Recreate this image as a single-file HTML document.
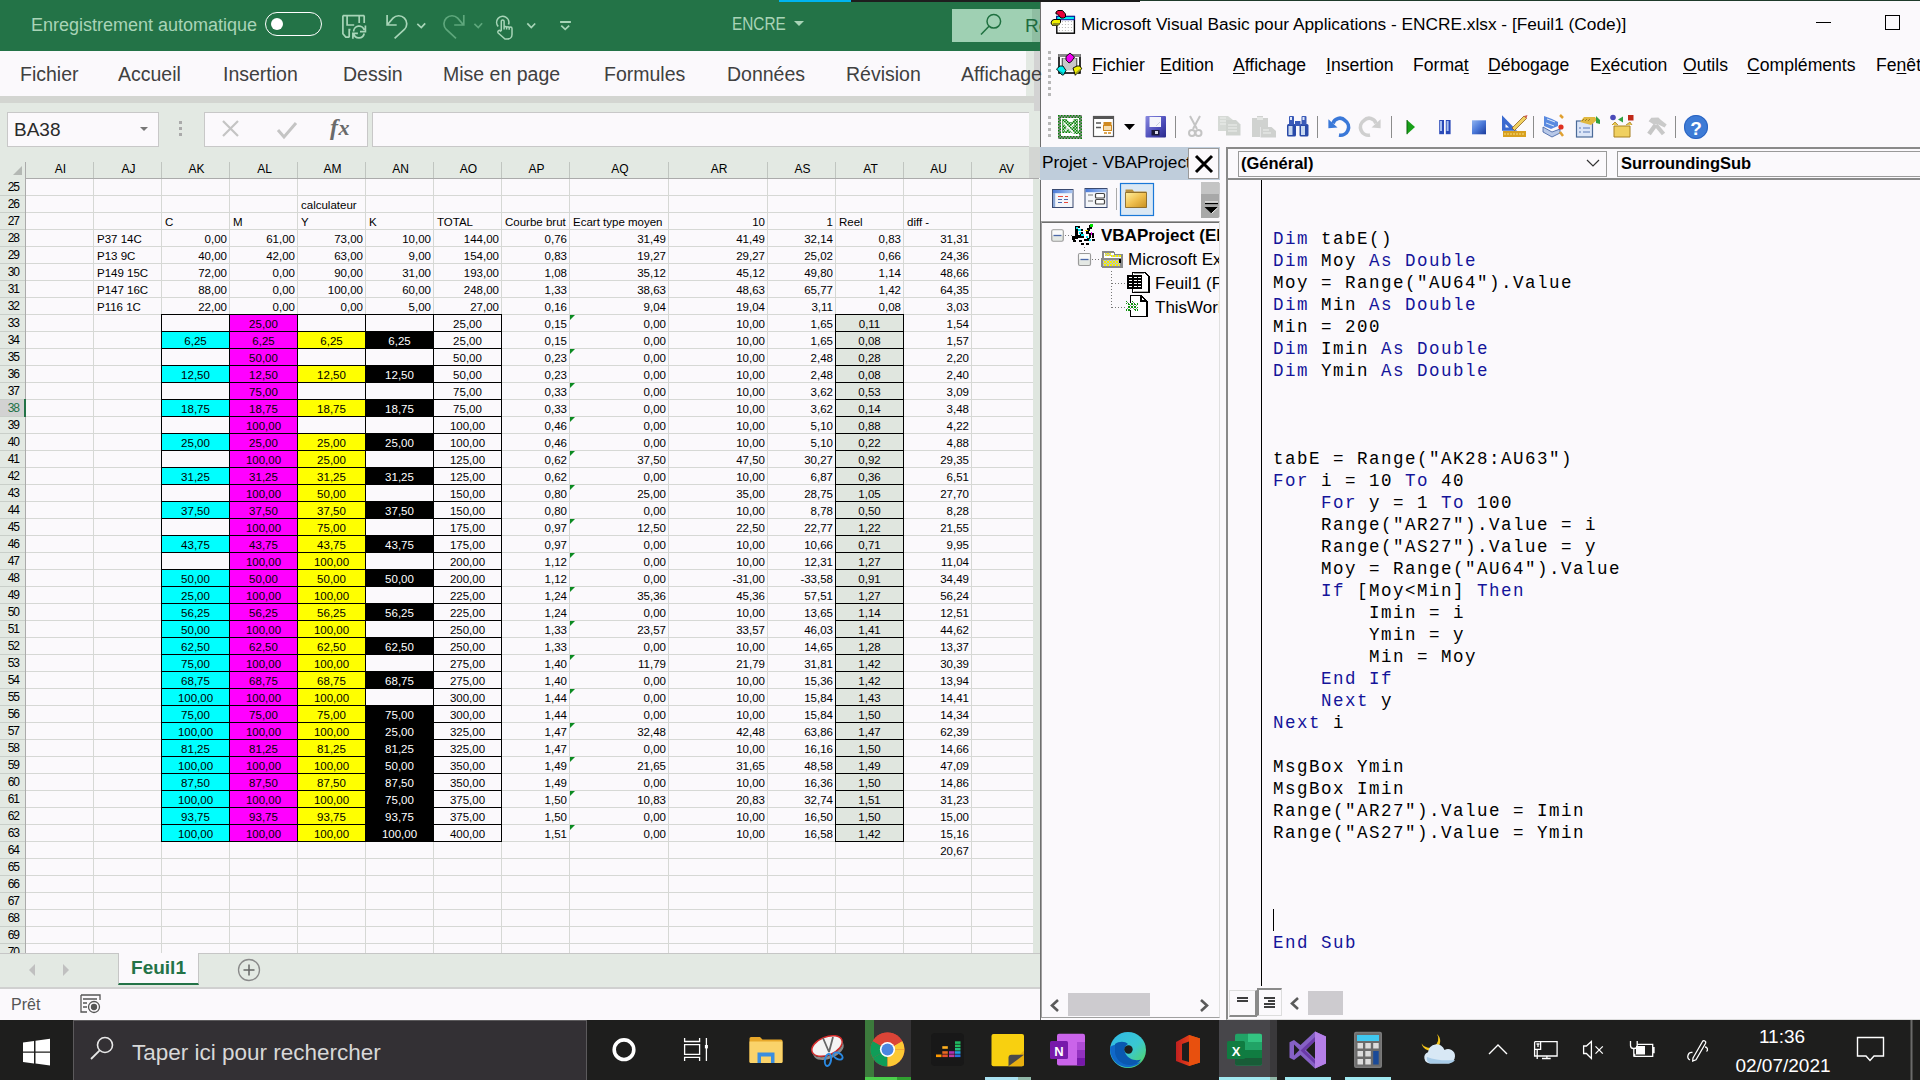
<!DOCTYPE html><html><head><meta charset="utf-8"><style>
*{margin:0;padding:0;box-sizing:border-box}
html,body{width:1920px;height:1080px;overflow:hidden;background:#fbf9fc;font-family:"Liberation Sans",sans-serif}
.a{position:absolute}
.cell{position:absolute;height:17px;font-size:11.5px;line-height:19px;color:#000;white-space:nowrap;overflow:visible}
.ch{position:absolute;top:161px;height:16px;font-size:12px;line-height:17px;text-align:center;color:#000;padding-left:3px}
.rh{position:absolute;left:0;width:25px;height:16px;font-size:12px;line-height:17px;text-align:right;padding-right:6px;letter-spacing:-1px;color:#000}
.vba{font-family:"Liberation Sans",sans-serif}
.code{position:absolute;left:1273px;font-family:"Liberation Mono",monospace;font-size:17.5px;letter-spacing:1.5px;line-height:22px;white-space:pre;color:#000}
.k{color:#14149a}
.mi{position:absolute;top:54px;font-size:17.6px;color:#000}
.mi u{text-decoration:underline;text-underline-offset:2px}
</style></head><body>
<div class="a" style="left:0;top:0;width:1040px;height:51px;background:#237347"></div><div class="a" style="left:779px;top:0;width:72px;height:2px;background:#00b4f0"></div><div class="a" style="left:851px;top:0;width:189px;height:2px;background:#1e1e1e"></div><div class="a" style="left:31px;top:13px;font-size:18px;color:#a9d4b7;line-height:24px">Enregistrement automatique</div><div class="a" style="left:265px;top:12px;width:57px;height:24px;border:1.5px solid #fff;border-radius:12px"></div><div class="a" style="left:271px;top:18px;width:12px;height:12px;background:#fff;border-radius:50%"></div><svg class="a" style="left:330px;top:0" width="250" height="50" viewBox="330 0 250 50" fill="none" stroke="#a8d5b8" stroke-width="1.7" stroke-linecap="butt">
<path d="M364.2 15.6V23M342.9 15.6H364.2M342.9 15.6V33.8L345.8 37.1H349.5M349.2 37V29.6H350.5M347.1 15.6V25H354.2M359.2 15.6V23"/>
<path d="M353.6 31.5A5.4 5.4 0 0 1 364.2 30M353.6 33.5A5.4 5.4 0 0 0 364.2 33.5M365.4 25.4V31.7H360M352.9 38.8V33.3H357.9"/>
<path d="M387.1 15V25H396.7M388 24L393 18.1A8 8 0 0 1 404.4 29.5L394.6 38.3"/>
<path d="M417.3 23.8L421.3 27.5L425.2 23.3"/>
<g stroke="#5ea77c"><path d="M463.8 15V25H454.2M462.9 24.2L457.7 18.1A8 8 0 0 0 446.3 29.5L456 38.3"/><path d="M474.4 23.8L478.3 27.5L482.1 23.3"/></g>
<path d="M498.2 26.5A6.1 6.1 0 1 1 508.5 24.5" stroke-width="1.6"/>
<path d="M501.3 31V21.3A1.4 1.4 0 0 1 504.1 21.3V29.4M504.1 27.5A1.3 1.3 0 0 1 506.6 27.5V29.6M506.6 28A1.3 1.3 0 0 1 509.2 28V29.8M509.2 28.5A1.4 1.4 0 0 1 512 28.5V34.5A4.5 4.5 0 0 1 507.5 39H505L498.2 33A1.5 1.5 0 0 1 500.5 31L501.3 31.5" stroke-width="1.5"/>
<path d="M527.3 23.3L531.3 27.5L535.2 23.5"/>
<path d="M560.1 22H570.9" stroke-width="2"/><path d="M561.3 25.6L565.2 29.4L569.2 25.6"/>
</svg><div class="a" style="left:732px;top:12px;font-size:18.5px;color:#a9d4b7;line-height:24px;transform:scaleX(0.83);transform-origin:0 0">ENCRE</div><div class="a" style="left:794px;top:21px;width:0;height:0;border-left:5px solid transparent;border-right:5px solid transparent;border-top:5px solid #a9d4b7"></div><div class="a" style="left:952px;top:9px;width:88px;height:33px;background:#9fd0b3"></div><div class="a" style="left:1032px;top:9px;width:8px;height:33px;background:#8fbea2"></div><svg class="a" style="left:979px;top:13px" width="24" height="26" viewBox="0 0 24 26"><circle cx="14.8" cy="8.3" r="6.8" fill="none" stroke="#1f7040" stroke-width="1.5"/><path d="M10 13.3L2 21.5" stroke="#1f7040" stroke-width="1.5"/></svg><div class="a" style="left:1025px;top:14px;font-size:19px;color:#1e6b40;line-height:24px;width:15px;overflow:hidden">Re</div><div class="a" style="left:0;top:51px;width:1040px;height:45px;background:#fbf9fc"></div><div class="a" style="left:20px;top:62px;font-size:19.5px;color:#404040;line-height:24px;white-space:nowrap;z-index:2">Fichier</div><div class="a" style="left:118px;top:62px;font-size:19.5px;color:#404040;line-height:24px;white-space:nowrap;z-index:2">Accueil</div><div class="a" style="left:223px;top:62px;font-size:19.5px;color:#404040;line-height:24px;white-space:nowrap;z-index:2">Insertion</div><div class="a" style="left:343px;top:62px;font-size:19.5px;color:#404040;line-height:24px;white-space:nowrap;z-index:2">Dessin</div><div class="a" style="left:443px;top:62px;font-size:19.5px;color:#404040;line-height:24px;white-space:nowrap;z-index:2">Mise en page</div><div class="a" style="left:604px;top:62px;font-size:19.5px;color:#404040;line-height:24px;white-space:nowrap;z-index:2">Formules</div><div class="a" style="left:727px;top:62px;font-size:19.5px;color:#404040;line-height:24px;white-space:nowrap;z-index:2">Données</div><div class="a" style="left:846px;top:62px;font-size:19.5px;color:#404040;line-height:24px;white-space:nowrap;z-index:2">Révision</div><div class="a" style="left:961px;top:62px;font-size:19.5px;color:#404040;line-height:24px;white-space:nowrap;z-index:2">Affichage</div><div class="a" style="left:0;top:96px;width:1040px;height:7px;background:#d3d5d1"></div><div class="a" style="left:0;top:103px;width:1040px;height:75px;background:#e3e9e3"></div><div class="a" style="left:7px;top:112px;width:152px;height:35px;background:#fbf9fc;border:1px solid #c8c8c8"></div><div class="a" style="left:14px;top:118px;font-size:19px;color:#2a2a2a;line-height:24px">BA38</div><div class="a" style="left:140px;top:127px;width:0;height:0;border-left:4px solid transparent;border-right:4px solid transparent;border-top:4px solid #777"></div><div class="a" style="left:179px;top:121px;width:3px;height:3px;background:#aaa;box-shadow:0 6px 0 #aaa,0 12px 0 #aaa"></div><div class="a" style="left:204px;top:112px;width:164px;height:35px;background:#fbf9fc;border:1px solid #c8c8c8"></div><svg class="a" style="left:220px;top:118px" width="140" height="24" viewBox="0 0 140 24"><path d="M3 3l15 15M18 3L3 18" stroke="#c4c4c4" stroke-width="2.2"/><path d="M58 12l6 7 12-14" stroke="#c4c4c4" stroke-width="3" fill="none"/></svg><div class="a" style="left:330px;top:112px;font-family:'Liberation Serif',serif;font-style:italic;font-weight:bold;font-size:24px;color:#6a6a6a;line-height:30px;letter-spacing:0.5px">f<span style="font-size:22px">x</span></div><div class="a" style="left:372px;top:112px;width:657px;height:35px;background:#fbf9fc;border:1px solid #c8c8c8;border-right:none"></div><div class="a" style="left:25px;top:178px;width:1010px;height:775px;background:#fbf9fc"></div><div class="a" style="left:0;top:178px;width:25px;height:775px;background:#e3e9e3"></div><div class="a" style="left:25px;top:178px;width:1014px;height:1px;background:#ababab;z-index:1"></div><div class="a" style="left:25px;top:195px;width:1008px;height:1px;background:#d6d8d5"></div><div class="a" style="left:0;top:195px;width:25px;height:1px;background:#c9cfc9"></div><div class="a" style="left:25px;top:212px;width:1008px;height:1px;background:#d6d8d5"></div><div class="a" style="left:0;top:212px;width:25px;height:1px;background:#c9cfc9"></div><div class="a" style="left:25px;top:229px;width:1008px;height:1px;background:#d6d8d5"></div><div class="a" style="left:0;top:229px;width:25px;height:1px;background:#c9cfc9"></div><div class="a" style="left:25px;top:246px;width:1008px;height:1px;background:#d6d8d5"></div><div class="a" style="left:0;top:246px;width:25px;height:1px;background:#c9cfc9"></div><div class="a" style="left:25px;top:263px;width:1008px;height:1px;background:#d6d8d5"></div><div class="a" style="left:0;top:263px;width:25px;height:1px;background:#c9cfc9"></div><div class="a" style="left:25px;top:280px;width:1008px;height:1px;background:#d6d8d5"></div><div class="a" style="left:0;top:280px;width:25px;height:1px;background:#c9cfc9"></div><div class="a" style="left:25px;top:297px;width:1008px;height:1px;background:#d6d8d5"></div><div class="a" style="left:0;top:297px;width:25px;height:1px;background:#c9cfc9"></div><div class="a" style="left:25px;top:314px;width:1008px;height:1px;background:#d6d8d5"></div><div class="a" style="left:0;top:314px;width:25px;height:1px;background:#c9cfc9"></div><div class="a" style="left:25px;top:331px;width:1008px;height:1px;background:#d6d8d5"></div><div class="a" style="left:0;top:331px;width:25px;height:1px;background:#c9cfc9"></div><div class="a" style="left:25px;top:348px;width:1008px;height:1px;background:#d6d8d5"></div><div class="a" style="left:0;top:348px;width:25px;height:1px;background:#c9cfc9"></div><div class="a" style="left:25px;top:365px;width:1008px;height:1px;background:#d6d8d5"></div><div class="a" style="left:0;top:365px;width:25px;height:1px;background:#c9cfc9"></div><div class="a" style="left:25px;top:382px;width:1008px;height:1px;background:#d6d8d5"></div><div class="a" style="left:0;top:382px;width:25px;height:1px;background:#c9cfc9"></div><div class="a" style="left:25px;top:399px;width:1008px;height:1px;background:#d6d8d5"></div><div class="a" style="left:0;top:399px;width:25px;height:1px;background:#c9cfc9"></div><div class="a" style="left:25px;top:416px;width:1008px;height:1px;background:#d6d8d5"></div><div class="a" style="left:0;top:416px;width:25px;height:1px;background:#c9cfc9"></div><div class="a" style="left:25px;top:433px;width:1008px;height:1px;background:#d6d8d5"></div><div class="a" style="left:0;top:433px;width:25px;height:1px;background:#c9cfc9"></div><div class="a" style="left:25px;top:450px;width:1008px;height:1px;background:#d6d8d5"></div><div class="a" style="left:0;top:450px;width:25px;height:1px;background:#c9cfc9"></div><div class="a" style="left:25px;top:467px;width:1008px;height:1px;background:#d6d8d5"></div><div class="a" style="left:0;top:467px;width:25px;height:1px;background:#c9cfc9"></div><div class="a" style="left:25px;top:484px;width:1008px;height:1px;background:#d6d8d5"></div><div class="a" style="left:0;top:484px;width:25px;height:1px;background:#c9cfc9"></div><div class="a" style="left:25px;top:501px;width:1008px;height:1px;background:#d6d8d5"></div><div class="a" style="left:0;top:501px;width:25px;height:1px;background:#c9cfc9"></div><div class="a" style="left:25px;top:518px;width:1008px;height:1px;background:#d6d8d5"></div><div class="a" style="left:0;top:518px;width:25px;height:1px;background:#c9cfc9"></div><div class="a" style="left:25px;top:535px;width:1008px;height:1px;background:#d6d8d5"></div><div class="a" style="left:0;top:535px;width:25px;height:1px;background:#c9cfc9"></div><div class="a" style="left:25px;top:552px;width:1008px;height:1px;background:#d6d8d5"></div><div class="a" style="left:0;top:552px;width:25px;height:1px;background:#c9cfc9"></div><div class="a" style="left:25px;top:569px;width:1008px;height:1px;background:#d6d8d5"></div><div class="a" style="left:0;top:569px;width:25px;height:1px;background:#c9cfc9"></div><div class="a" style="left:25px;top:586px;width:1008px;height:1px;background:#d6d8d5"></div><div class="a" style="left:0;top:586px;width:25px;height:1px;background:#c9cfc9"></div><div class="a" style="left:25px;top:603px;width:1008px;height:1px;background:#d6d8d5"></div><div class="a" style="left:0;top:603px;width:25px;height:1px;background:#c9cfc9"></div><div class="a" style="left:25px;top:620px;width:1008px;height:1px;background:#d6d8d5"></div><div class="a" style="left:0;top:620px;width:25px;height:1px;background:#c9cfc9"></div><div class="a" style="left:25px;top:637px;width:1008px;height:1px;background:#d6d8d5"></div><div class="a" style="left:0;top:637px;width:25px;height:1px;background:#c9cfc9"></div><div class="a" style="left:25px;top:654px;width:1008px;height:1px;background:#d6d8d5"></div><div class="a" style="left:0;top:654px;width:25px;height:1px;background:#c9cfc9"></div><div class="a" style="left:25px;top:671px;width:1008px;height:1px;background:#d6d8d5"></div><div class="a" style="left:0;top:671px;width:25px;height:1px;background:#c9cfc9"></div><div class="a" style="left:25px;top:688px;width:1008px;height:1px;background:#d6d8d5"></div><div class="a" style="left:0;top:688px;width:25px;height:1px;background:#c9cfc9"></div><div class="a" style="left:25px;top:705px;width:1008px;height:1px;background:#d6d8d5"></div><div class="a" style="left:0;top:705px;width:25px;height:1px;background:#c9cfc9"></div><div class="a" style="left:25px;top:722px;width:1008px;height:1px;background:#d6d8d5"></div><div class="a" style="left:0;top:722px;width:25px;height:1px;background:#c9cfc9"></div><div class="a" style="left:25px;top:739px;width:1008px;height:1px;background:#d6d8d5"></div><div class="a" style="left:0;top:739px;width:25px;height:1px;background:#c9cfc9"></div><div class="a" style="left:25px;top:756px;width:1008px;height:1px;background:#d6d8d5"></div><div class="a" style="left:0;top:756px;width:25px;height:1px;background:#c9cfc9"></div><div class="a" style="left:25px;top:773px;width:1008px;height:1px;background:#d6d8d5"></div><div class="a" style="left:0;top:773px;width:25px;height:1px;background:#c9cfc9"></div><div class="a" style="left:25px;top:790px;width:1008px;height:1px;background:#d6d8d5"></div><div class="a" style="left:0;top:790px;width:25px;height:1px;background:#c9cfc9"></div><div class="a" style="left:25px;top:807px;width:1008px;height:1px;background:#d6d8d5"></div><div class="a" style="left:0;top:807px;width:25px;height:1px;background:#c9cfc9"></div><div class="a" style="left:25px;top:824px;width:1008px;height:1px;background:#d6d8d5"></div><div class="a" style="left:0;top:824px;width:25px;height:1px;background:#c9cfc9"></div><div class="a" style="left:25px;top:841px;width:1008px;height:1px;background:#d6d8d5"></div><div class="a" style="left:0;top:841px;width:25px;height:1px;background:#c9cfc9"></div><div class="a" style="left:25px;top:858px;width:1008px;height:1px;background:#d6d8d5"></div><div class="a" style="left:0;top:858px;width:25px;height:1px;background:#c9cfc9"></div><div class="a" style="left:25px;top:875px;width:1008px;height:1px;background:#d6d8d5"></div><div class="a" style="left:0;top:875px;width:25px;height:1px;background:#c9cfc9"></div><div class="a" style="left:25px;top:892px;width:1008px;height:1px;background:#d6d8d5"></div><div class="a" style="left:0;top:892px;width:25px;height:1px;background:#c9cfc9"></div><div class="a" style="left:25px;top:909px;width:1008px;height:1px;background:#d6d8d5"></div><div class="a" style="left:0;top:909px;width:25px;height:1px;background:#c9cfc9"></div><div class="a" style="left:25px;top:926px;width:1008px;height:1px;background:#d6d8d5"></div><div class="a" style="left:0;top:926px;width:25px;height:1px;background:#c9cfc9"></div><div class="a" style="left:25px;top:943px;width:1008px;height:1px;background:#d6d8d5"></div><div class="a" style="left:0;top:943px;width:25px;height:1px;background:#c9cfc9"></div><div class="a" style="left:93px;top:179px;width:1px;height:774px;background:#d6d8d5"></div><div class="a" style="left:161px;top:179px;width:1px;height:774px;background:#d6d8d5"></div><div class="a" style="left:229px;top:179px;width:1px;height:774px;background:#d6d8d5"></div><div class="a" style="left:297px;top:179px;width:1px;height:774px;background:#d6d8d5"></div><div class="a" style="left:365px;top:179px;width:1px;height:774px;background:#d6d8d5"></div><div class="a" style="left:433px;top:179px;width:1px;height:774px;background:#d6d8d5"></div><div class="a" style="left:501px;top:179px;width:1px;height:774px;background:#d6d8d5"></div><div class="a" style="left:569px;top:179px;width:1px;height:774px;background:#d6d8d5"></div><div class="a" style="left:668px;top:179px;width:1px;height:774px;background:#d6d8d5"></div><div class="a" style="left:767px;top:179px;width:1px;height:774px;background:#d6d8d5"></div><div class="a" style="left:835px;top:179px;width:1px;height:774px;background:#d6d8d5"></div><div class="a" style="left:903px;top:179px;width:1px;height:774px;background:#d6d8d5"></div><div class="a" style="left:971px;top:179px;width:1px;height:774px;background:#d6d8d5"></div><div class="a" style="left:1039px;top:179px;width:1px;height:774px;background:#d6d8d5"></div><div class="a" style="left:93px;top:162px;width:1px;height:16px;background:#c0c5c0"></div><div class="a" style="left:161px;top:162px;width:1px;height:16px;background:#c0c5c0"></div><div class="a" style="left:229px;top:162px;width:1px;height:16px;background:#c0c5c0"></div><div class="a" style="left:297px;top:162px;width:1px;height:16px;background:#c0c5c0"></div><div class="a" style="left:365px;top:162px;width:1px;height:16px;background:#c0c5c0"></div><div class="a" style="left:433px;top:162px;width:1px;height:16px;background:#c0c5c0"></div><div class="a" style="left:501px;top:162px;width:1px;height:16px;background:#c0c5c0"></div><div class="a" style="left:569px;top:162px;width:1px;height:16px;background:#c0c5c0"></div><div class="a" style="left:668px;top:162px;width:1px;height:16px;background:#c0c5c0"></div><div class="a" style="left:767px;top:162px;width:1px;height:16px;background:#c0c5c0"></div><div class="a" style="left:835px;top:162px;width:1px;height:16px;background:#c0c5c0"></div><div class="a" style="left:903px;top:162px;width:1px;height:16px;background:#c0c5c0"></div><div class="a" style="left:971px;top:162px;width:1px;height:16px;background:#c0c5c0"></div><div class="a" style="left:1039px;top:162px;width:1px;height:16px;background:#c0c5c0"></div><div class="a" style="left:25px;top:162px;width:1px;height:791px;background:#ababab"></div><div class="a" style="left:13px;top:166px;width:0;height:0;border-left:9px solid transparent;border-bottom:9px solid #b4b8b4"></div><div class="ch" style="left:25px;width:68px">AI</div><div class="ch" style="left:93px;width:68px">AJ</div><div class="ch" style="left:161px;width:68px">AK</div><div class="ch" style="left:229px;width:68px">AL</div><div class="ch" style="left:297px;width:68px">AM</div><div class="ch" style="left:365px;width:68px">AN</div><div class="ch" style="left:433px;width:68px">AO</div><div class="ch" style="left:501px;width:68px">AP</div><div class="ch" style="left:569px;width:99px">AQ</div><div class="ch" style="left:668px;width:99px">AR</div><div class="ch" style="left:767px;width:68px">AS</div><div class="ch" style="left:835px;width:68px">AT</div><div class="ch" style="left:903px;width:68px">AU</div><div class="ch" style="left:971px;width:68px">AV</div><div class="rh" style="top:179px">25</div><div class="rh" style="top:196px">26</div><div class="rh" style="top:213px">27</div><div class="rh" style="top:230px">28</div><div class="rh" style="top:247px">29</div><div class="rh" style="top:264px">30</div><div class="rh" style="top:281px">31</div><div class="rh" style="top:298px">32</div><div class="rh" style="top:315px">33</div><div class="rh" style="top:332px">34</div><div class="rh" style="top:349px">35</div><div class="rh" style="top:366px">36</div><div class="rh" style="top:383px">37</div><div class="a" style="left:0;top:400px;width:25px;height:16px;background:#d2d2d2"></div><div class="a" style="left:24px;top:399px;width:2px;height:18px;background:#237347;z-index:1"></div><div class="rh" style="top:400px;color:#237347">38</div><div class="rh" style="top:417px">39</div><div class="rh" style="top:434px">40</div><div class="rh" style="top:451px">41</div><div class="rh" style="top:468px">42</div><div class="rh" style="top:485px">43</div><div class="rh" style="top:502px">44</div><div class="rh" style="top:519px">45</div><div class="rh" style="top:536px">46</div><div class="rh" style="top:553px">47</div><div class="rh" style="top:570px">48</div><div class="rh" style="top:587px">49</div><div class="rh" style="top:604px">50</div><div class="rh" style="top:621px">51</div><div class="rh" style="top:638px">52</div><div class="rh" style="top:655px">53</div><div class="rh" style="top:672px">54</div><div class="rh" style="top:689px">55</div><div class="rh" style="top:706px">56</div><div class="rh" style="top:723px">57</div><div class="rh" style="top:740px">58</div><div class="rh" style="top:757px">59</div><div class="rh" style="top:774px">60</div><div class="rh" style="top:791px">61</div><div class="rh" style="top:808px">62</div><div class="rh" style="top:825px">63</div><div class="rh" style="top:842px">64</div><div class="rh" style="top:859px">65</div><div class="rh" style="top:876px">66</div><div class="rh" style="top:893px">67</div><div class="rh" style="top:910px">68</div><div class="rh" style="top:927px">69</div><div class="rh" style="top:944px">70</div><div class="a" style="left:229px;top:314px;width:69px;height:18px;background:#ff00ff;border:1px solid #000"></div><div class="a" style="left:835px;top:314px;width:69px;height:18px;background:#e0e6df;border:1px solid #000"></div><div class="a" style="left:161px;top:331px;width:69px;height:18px;background:#00ffff;border:1px solid #000"></div><div class="a" style="left:229px;top:331px;width:69px;height:18px;background:#ff00ff;border:1px solid #000"></div><div class="a" style="left:297px;top:331px;width:69px;height:18px;background:#ffff00;border:1px solid #000"></div><div class="a" style="left:365px;top:331px;width:69px;height:18px;background:#000000;border:1px solid #000"></div><div class="a" style="left:835px;top:331px;width:69px;height:18px;background:#e0e6df;border:1px solid #000"></div><div class="a" style="left:229px;top:348px;width:69px;height:18px;background:#ff00ff;border:1px solid #000"></div><div class="a" style="left:835px;top:348px;width:69px;height:18px;background:#e0e6df;border:1px solid #000"></div><div class="a" style="left:161px;top:365px;width:69px;height:18px;background:#00ffff;border:1px solid #000"></div><div class="a" style="left:229px;top:365px;width:69px;height:18px;background:#ff00ff;border:1px solid #000"></div><div class="a" style="left:297px;top:365px;width:69px;height:18px;background:#ffff00;border:1px solid #000"></div><div class="a" style="left:365px;top:365px;width:69px;height:18px;background:#000000;border:1px solid #000"></div><div class="a" style="left:835px;top:365px;width:69px;height:18px;background:#e0e6df;border:1px solid #000"></div><div class="a" style="left:229px;top:382px;width:69px;height:18px;background:#ff00ff;border:1px solid #000"></div><div class="a" style="left:835px;top:382px;width:69px;height:18px;background:#e0e6df;border:1px solid #000"></div><div class="a" style="left:161px;top:399px;width:69px;height:18px;background:#00ffff;border:1px solid #000"></div><div class="a" style="left:229px;top:399px;width:69px;height:18px;background:#ff00ff;border:1px solid #000"></div><div class="a" style="left:297px;top:399px;width:69px;height:18px;background:#ffff00;border:1px solid #000"></div><div class="a" style="left:365px;top:399px;width:69px;height:18px;background:#000000;border:1px solid #000"></div><div class="a" style="left:835px;top:399px;width:69px;height:18px;background:#e0e6df;border:1px solid #000"></div><div class="a" style="left:229px;top:416px;width:69px;height:18px;background:#ff00ff;border:1px solid #000"></div><div class="a" style="left:835px;top:416px;width:69px;height:18px;background:#e0e6df;border:1px solid #000"></div><div class="a" style="left:161px;top:433px;width:69px;height:18px;background:#00ffff;border:1px solid #000"></div><div class="a" style="left:229px;top:433px;width:69px;height:18px;background:#ff00ff;border:1px solid #000"></div><div class="a" style="left:297px;top:433px;width:69px;height:18px;background:#ffff00;border:1px solid #000"></div><div class="a" style="left:365px;top:433px;width:69px;height:18px;background:#000000;border:1px solid #000"></div><div class="a" style="left:835px;top:433px;width:69px;height:18px;background:#e0e6df;border:1px solid #000"></div><div class="a" style="left:229px;top:450px;width:69px;height:18px;background:#ff00ff;border:1px solid #000"></div><div class="a" style="left:297px;top:450px;width:69px;height:18px;background:#ffff00;border:1px solid #000"></div><div class="a" style="left:835px;top:450px;width:69px;height:18px;background:#e0e6df;border:1px solid #000"></div><div class="a" style="left:161px;top:467px;width:69px;height:18px;background:#00ffff;border:1px solid #000"></div><div class="a" style="left:229px;top:467px;width:69px;height:18px;background:#ff00ff;border:1px solid #000"></div><div class="a" style="left:297px;top:467px;width:69px;height:18px;background:#ffff00;border:1px solid #000"></div><div class="a" style="left:365px;top:467px;width:69px;height:18px;background:#000000;border:1px solid #000"></div><div class="a" style="left:835px;top:467px;width:69px;height:18px;background:#e0e6df;border:1px solid #000"></div><div class="a" style="left:229px;top:484px;width:69px;height:18px;background:#ff00ff;border:1px solid #000"></div><div class="a" style="left:297px;top:484px;width:69px;height:18px;background:#ffff00;border:1px solid #000"></div><div class="a" style="left:835px;top:484px;width:69px;height:18px;background:#e0e6df;border:1px solid #000"></div><div class="a" style="left:161px;top:501px;width:69px;height:18px;background:#00ffff;border:1px solid #000"></div><div class="a" style="left:229px;top:501px;width:69px;height:18px;background:#ff00ff;border:1px solid #000"></div><div class="a" style="left:297px;top:501px;width:69px;height:18px;background:#ffff00;border:1px solid #000"></div><div class="a" style="left:365px;top:501px;width:69px;height:18px;background:#000000;border:1px solid #000"></div><div class="a" style="left:835px;top:501px;width:69px;height:18px;background:#e0e6df;border:1px solid #000"></div><div class="a" style="left:229px;top:518px;width:69px;height:18px;background:#ff00ff;border:1px solid #000"></div><div class="a" style="left:297px;top:518px;width:69px;height:18px;background:#ffff00;border:1px solid #000"></div><div class="a" style="left:835px;top:518px;width:69px;height:18px;background:#e0e6df;border:1px solid #000"></div><div class="a" style="left:161px;top:535px;width:69px;height:18px;background:#00ffff;border:1px solid #000"></div><div class="a" style="left:229px;top:535px;width:69px;height:18px;background:#ff00ff;border:1px solid #000"></div><div class="a" style="left:297px;top:535px;width:69px;height:18px;background:#ffff00;border:1px solid #000"></div><div class="a" style="left:365px;top:535px;width:69px;height:18px;background:#000000;border:1px solid #000"></div><div class="a" style="left:835px;top:535px;width:69px;height:18px;background:#e0e6df;border:1px solid #000"></div><div class="a" style="left:229px;top:552px;width:69px;height:18px;background:#ff00ff;border:1px solid #000"></div><div class="a" style="left:297px;top:552px;width:69px;height:18px;background:#ffff00;border:1px solid #000"></div><div class="a" style="left:835px;top:552px;width:69px;height:18px;background:#e0e6df;border:1px solid #000"></div><div class="a" style="left:161px;top:569px;width:69px;height:18px;background:#00ffff;border:1px solid #000"></div><div class="a" style="left:229px;top:569px;width:69px;height:18px;background:#ff00ff;border:1px solid #000"></div><div class="a" style="left:297px;top:569px;width:69px;height:18px;background:#ffff00;border:1px solid #000"></div><div class="a" style="left:365px;top:569px;width:69px;height:18px;background:#000000;border:1px solid #000"></div><div class="a" style="left:835px;top:569px;width:69px;height:18px;background:#e0e6df;border:1px solid #000"></div><div class="a" style="left:161px;top:586px;width:69px;height:18px;background:#00ffff;border:1px solid #000"></div><div class="a" style="left:229px;top:586px;width:69px;height:18px;background:#ff00ff;border:1px solid #000"></div><div class="a" style="left:297px;top:586px;width:69px;height:18px;background:#ffff00;border:1px solid #000"></div><div class="a" style="left:835px;top:586px;width:69px;height:18px;background:#e0e6df;border:1px solid #000"></div><div class="a" style="left:161px;top:603px;width:69px;height:18px;background:#00ffff;border:1px solid #000"></div><div class="a" style="left:229px;top:603px;width:69px;height:18px;background:#ff00ff;border:1px solid #000"></div><div class="a" style="left:297px;top:603px;width:69px;height:18px;background:#ffff00;border:1px solid #000"></div><div class="a" style="left:365px;top:603px;width:69px;height:18px;background:#000000;border:1px solid #000"></div><div class="a" style="left:835px;top:603px;width:69px;height:18px;background:#e0e6df;border:1px solid #000"></div><div class="a" style="left:161px;top:620px;width:69px;height:18px;background:#00ffff;border:1px solid #000"></div><div class="a" style="left:229px;top:620px;width:69px;height:18px;background:#ff00ff;border:1px solid #000"></div><div class="a" style="left:297px;top:620px;width:69px;height:18px;background:#ffff00;border:1px solid #000"></div><div class="a" style="left:835px;top:620px;width:69px;height:18px;background:#e0e6df;border:1px solid #000"></div><div class="a" style="left:161px;top:637px;width:69px;height:18px;background:#00ffff;border:1px solid #000"></div><div class="a" style="left:229px;top:637px;width:69px;height:18px;background:#ff00ff;border:1px solid #000"></div><div class="a" style="left:297px;top:637px;width:69px;height:18px;background:#ffff00;border:1px solid #000"></div><div class="a" style="left:365px;top:637px;width:69px;height:18px;background:#000000;border:1px solid #000"></div><div class="a" style="left:835px;top:637px;width:69px;height:18px;background:#e0e6df;border:1px solid #000"></div><div class="a" style="left:161px;top:654px;width:69px;height:18px;background:#00ffff;border:1px solid #000"></div><div class="a" style="left:229px;top:654px;width:69px;height:18px;background:#ff00ff;border:1px solid #000"></div><div class="a" style="left:297px;top:654px;width:69px;height:18px;background:#ffff00;border:1px solid #000"></div><div class="a" style="left:835px;top:654px;width:69px;height:18px;background:#e0e6df;border:1px solid #000"></div><div class="a" style="left:161px;top:671px;width:69px;height:18px;background:#00ffff;border:1px solid #000"></div><div class="a" style="left:229px;top:671px;width:69px;height:18px;background:#ff00ff;border:1px solid #000"></div><div class="a" style="left:297px;top:671px;width:69px;height:18px;background:#ffff00;border:1px solid #000"></div><div class="a" style="left:365px;top:671px;width:69px;height:18px;background:#000000;border:1px solid #000"></div><div class="a" style="left:835px;top:671px;width:69px;height:18px;background:#e0e6df;border:1px solid #000"></div><div class="a" style="left:161px;top:688px;width:69px;height:18px;background:#00ffff;border:1px solid #000"></div><div class="a" style="left:229px;top:688px;width:69px;height:18px;background:#ff00ff;border:1px solid #000"></div><div class="a" style="left:297px;top:688px;width:69px;height:18px;background:#ffff00;border:1px solid #000"></div><div class="a" style="left:835px;top:688px;width:69px;height:18px;background:#e0e6df;border:1px solid #000"></div><div class="a" style="left:161px;top:705px;width:69px;height:18px;background:#00ffff;border:1px solid #000"></div><div class="a" style="left:229px;top:705px;width:69px;height:18px;background:#ff00ff;border:1px solid #000"></div><div class="a" style="left:297px;top:705px;width:69px;height:18px;background:#ffff00;border:1px solid #000"></div><div class="a" style="left:365px;top:705px;width:69px;height:18px;background:#000000;border:1px solid #000"></div><div class="a" style="left:835px;top:705px;width:69px;height:18px;background:#e0e6df;border:1px solid #000"></div><div class="a" style="left:161px;top:722px;width:69px;height:18px;background:#00ffff;border:1px solid #000"></div><div class="a" style="left:229px;top:722px;width:69px;height:18px;background:#ff00ff;border:1px solid #000"></div><div class="a" style="left:297px;top:722px;width:69px;height:18px;background:#ffff00;border:1px solid #000"></div><div class="a" style="left:365px;top:722px;width:69px;height:18px;background:#000000;border:1px solid #000"></div><div class="a" style="left:835px;top:722px;width:69px;height:18px;background:#e0e6df;border:1px solid #000"></div><div class="a" style="left:161px;top:739px;width:69px;height:18px;background:#00ffff;border:1px solid #000"></div><div class="a" style="left:229px;top:739px;width:69px;height:18px;background:#ff00ff;border:1px solid #000"></div><div class="a" style="left:297px;top:739px;width:69px;height:18px;background:#ffff00;border:1px solid #000"></div><div class="a" style="left:365px;top:739px;width:69px;height:18px;background:#000000;border:1px solid #000"></div><div class="a" style="left:835px;top:739px;width:69px;height:18px;background:#e0e6df;border:1px solid #000"></div><div class="a" style="left:161px;top:756px;width:69px;height:18px;background:#00ffff;border:1px solid #000"></div><div class="a" style="left:229px;top:756px;width:69px;height:18px;background:#ff00ff;border:1px solid #000"></div><div class="a" style="left:297px;top:756px;width:69px;height:18px;background:#ffff00;border:1px solid #000"></div><div class="a" style="left:365px;top:756px;width:69px;height:18px;background:#000000;border:1px solid #000"></div><div class="a" style="left:835px;top:756px;width:69px;height:18px;background:#e0e6df;border:1px solid #000"></div><div class="a" style="left:161px;top:773px;width:69px;height:18px;background:#00ffff;border:1px solid #000"></div><div class="a" style="left:229px;top:773px;width:69px;height:18px;background:#ff00ff;border:1px solid #000"></div><div class="a" style="left:297px;top:773px;width:69px;height:18px;background:#ffff00;border:1px solid #000"></div><div class="a" style="left:365px;top:773px;width:69px;height:18px;background:#000000;border:1px solid #000"></div><div class="a" style="left:835px;top:773px;width:69px;height:18px;background:#e0e6df;border:1px solid #000"></div><div class="a" style="left:161px;top:790px;width:69px;height:18px;background:#00ffff;border:1px solid #000"></div><div class="a" style="left:229px;top:790px;width:69px;height:18px;background:#ff00ff;border:1px solid #000"></div><div class="a" style="left:297px;top:790px;width:69px;height:18px;background:#ffff00;border:1px solid #000"></div><div class="a" style="left:365px;top:790px;width:69px;height:18px;background:#000000;border:1px solid #000"></div><div class="a" style="left:835px;top:790px;width:69px;height:18px;background:#e0e6df;border:1px solid #000"></div><div class="a" style="left:161px;top:807px;width:69px;height:18px;background:#00ffff;border:1px solid #000"></div><div class="a" style="left:229px;top:807px;width:69px;height:18px;background:#ff00ff;border:1px solid #000"></div><div class="a" style="left:297px;top:807px;width:69px;height:18px;background:#ffff00;border:1px solid #000"></div><div class="a" style="left:365px;top:807px;width:69px;height:18px;background:#000000;border:1px solid #000"></div><div class="a" style="left:835px;top:807px;width:69px;height:18px;background:#e0e6df;border:1px solid #000"></div><div class="a" style="left:161px;top:824px;width:69px;height:18px;background:#00ffff;border:1px solid #000"></div><div class="a" style="left:229px;top:824px;width:69px;height:18px;background:#ff00ff;border:1px solid #000"></div><div class="a" style="left:297px;top:824px;width:69px;height:18px;background:#ffff00;border:1px solid #000"></div><div class="a" style="left:365px;top:824px;width:69px;height:18px;background:#000000;border:1px solid #000"></div><div class="a" style="left:835px;top:824px;width:69px;height:18px;background:#e0e6df;border:1px solid #000"></div><div class="a" style="left:161px;top:314px;width:69px;height:18px;border:1px solid #000"></div><div class="a" style="left:229px;top:314px;width:69px;height:18px;border:1px solid #000"></div><div class="a" style="left:297px;top:314px;width:69px;height:18px;border:1px solid #000"></div><div class="a" style="left:365px;top:314px;width:69px;height:18px;border:1px solid #000"></div><div class="a" style="left:433px;top:314px;width:69px;height:18px;border:1px solid #000"></div><div class="a" style="left:161px;top:331px;width:69px;height:18px;border:1px solid #000"></div><div class="a" style="left:229px;top:331px;width:69px;height:18px;border:1px solid #000"></div><div class="a" style="left:297px;top:331px;width:69px;height:18px;border:1px solid #000"></div><div class="a" style="left:365px;top:331px;width:69px;height:18px;border:1px solid #000"></div><div class="a" style="left:433px;top:331px;width:69px;height:18px;border:1px solid #000"></div><div class="a" style="left:161px;top:348px;width:69px;height:18px;border:1px solid #000"></div><div class="a" style="left:229px;top:348px;width:69px;height:18px;border:1px solid #000"></div><div class="a" style="left:297px;top:348px;width:69px;height:18px;border:1px solid #000"></div><div class="a" style="left:365px;top:348px;width:69px;height:18px;border:1px solid #000"></div><div class="a" style="left:433px;top:348px;width:69px;height:18px;border:1px solid #000"></div><div class="a" style="left:161px;top:365px;width:69px;height:18px;border:1px solid #000"></div><div class="a" style="left:229px;top:365px;width:69px;height:18px;border:1px solid #000"></div><div class="a" style="left:297px;top:365px;width:69px;height:18px;border:1px solid #000"></div><div class="a" style="left:365px;top:365px;width:69px;height:18px;border:1px solid #000"></div><div class="a" style="left:433px;top:365px;width:69px;height:18px;border:1px solid #000"></div><div class="a" style="left:161px;top:382px;width:69px;height:18px;border:1px solid #000"></div><div class="a" style="left:229px;top:382px;width:69px;height:18px;border:1px solid #000"></div><div class="a" style="left:297px;top:382px;width:69px;height:18px;border:1px solid #000"></div><div class="a" style="left:365px;top:382px;width:69px;height:18px;border:1px solid #000"></div><div class="a" style="left:433px;top:382px;width:69px;height:18px;border:1px solid #000"></div><div class="a" style="left:161px;top:399px;width:69px;height:18px;border:1px solid #000"></div><div class="a" style="left:229px;top:399px;width:69px;height:18px;border:1px solid #000"></div><div class="a" style="left:297px;top:399px;width:69px;height:18px;border:1px solid #000"></div><div class="a" style="left:365px;top:399px;width:69px;height:18px;border:1px solid #000"></div><div class="a" style="left:433px;top:399px;width:69px;height:18px;border:1px solid #000"></div><div class="a" style="left:161px;top:416px;width:69px;height:18px;border:1px solid #000"></div><div class="a" style="left:229px;top:416px;width:69px;height:18px;border:1px solid #000"></div><div class="a" style="left:297px;top:416px;width:69px;height:18px;border:1px solid #000"></div><div class="a" style="left:365px;top:416px;width:69px;height:18px;border:1px solid #000"></div><div class="a" style="left:433px;top:416px;width:69px;height:18px;border:1px solid #000"></div><div class="a" style="left:161px;top:433px;width:69px;height:18px;border:1px solid #000"></div><div class="a" style="left:229px;top:433px;width:69px;height:18px;border:1px solid #000"></div><div class="a" style="left:297px;top:433px;width:69px;height:18px;border:1px solid #000"></div><div class="a" style="left:365px;top:433px;width:69px;height:18px;border:1px solid #000"></div><div class="a" style="left:433px;top:433px;width:69px;height:18px;border:1px solid #000"></div><div class="a" style="left:161px;top:450px;width:69px;height:18px;border:1px solid #000"></div><div class="a" style="left:229px;top:450px;width:69px;height:18px;border:1px solid #000"></div><div class="a" style="left:297px;top:450px;width:69px;height:18px;border:1px solid #000"></div><div class="a" style="left:365px;top:450px;width:69px;height:18px;border:1px solid #000"></div><div class="a" style="left:433px;top:450px;width:69px;height:18px;border:1px solid #000"></div><div class="a" style="left:161px;top:467px;width:69px;height:18px;border:1px solid #000"></div><div class="a" style="left:229px;top:467px;width:69px;height:18px;border:1px solid #000"></div><div class="a" style="left:297px;top:467px;width:69px;height:18px;border:1px solid #000"></div><div class="a" style="left:365px;top:467px;width:69px;height:18px;border:1px solid #000"></div><div class="a" style="left:433px;top:467px;width:69px;height:18px;border:1px solid #000"></div><div class="a" style="left:161px;top:484px;width:69px;height:18px;border:1px solid #000"></div><div class="a" style="left:229px;top:484px;width:69px;height:18px;border:1px solid #000"></div><div class="a" style="left:297px;top:484px;width:69px;height:18px;border:1px solid #000"></div><div class="a" style="left:365px;top:484px;width:69px;height:18px;border:1px solid #000"></div><div class="a" style="left:433px;top:484px;width:69px;height:18px;border:1px solid #000"></div><div class="a" style="left:161px;top:501px;width:69px;height:18px;border:1px solid #000"></div><div class="a" style="left:229px;top:501px;width:69px;height:18px;border:1px solid #000"></div><div class="a" style="left:297px;top:501px;width:69px;height:18px;border:1px solid #000"></div><div class="a" style="left:365px;top:501px;width:69px;height:18px;border:1px solid #000"></div><div class="a" style="left:433px;top:501px;width:69px;height:18px;border:1px solid #000"></div><div class="a" style="left:161px;top:518px;width:69px;height:18px;border:1px solid #000"></div><div class="a" style="left:229px;top:518px;width:69px;height:18px;border:1px solid #000"></div><div class="a" style="left:297px;top:518px;width:69px;height:18px;border:1px solid #000"></div><div class="a" style="left:365px;top:518px;width:69px;height:18px;border:1px solid #000"></div><div class="a" style="left:433px;top:518px;width:69px;height:18px;border:1px solid #000"></div><div class="a" style="left:161px;top:535px;width:69px;height:18px;border:1px solid #000"></div><div class="a" style="left:229px;top:535px;width:69px;height:18px;border:1px solid #000"></div><div class="a" style="left:297px;top:535px;width:69px;height:18px;border:1px solid #000"></div><div class="a" style="left:365px;top:535px;width:69px;height:18px;border:1px solid #000"></div><div class="a" style="left:433px;top:535px;width:69px;height:18px;border:1px solid #000"></div><div class="a" style="left:161px;top:552px;width:69px;height:18px;border:1px solid #000"></div><div class="a" style="left:229px;top:552px;width:69px;height:18px;border:1px solid #000"></div><div class="a" style="left:297px;top:552px;width:69px;height:18px;border:1px solid #000"></div><div class="a" style="left:365px;top:552px;width:69px;height:18px;border:1px solid #000"></div><div class="a" style="left:433px;top:552px;width:69px;height:18px;border:1px solid #000"></div><div class="a" style="left:161px;top:569px;width:69px;height:18px;border:1px solid #000"></div><div class="a" style="left:229px;top:569px;width:69px;height:18px;border:1px solid #000"></div><div class="a" style="left:297px;top:569px;width:69px;height:18px;border:1px solid #000"></div><div class="a" style="left:365px;top:569px;width:69px;height:18px;border:1px solid #000"></div><div class="a" style="left:433px;top:569px;width:69px;height:18px;border:1px solid #000"></div><div class="a" style="left:161px;top:586px;width:69px;height:18px;border:1px solid #000"></div><div class="a" style="left:229px;top:586px;width:69px;height:18px;border:1px solid #000"></div><div class="a" style="left:297px;top:586px;width:69px;height:18px;border:1px solid #000"></div><div class="a" style="left:365px;top:586px;width:69px;height:18px;border:1px solid #000"></div><div class="a" style="left:433px;top:586px;width:69px;height:18px;border:1px solid #000"></div><div class="a" style="left:161px;top:603px;width:69px;height:18px;border:1px solid #000"></div><div class="a" style="left:229px;top:603px;width:69px;height:18px;border:1px solid #000"></div><div class="a" style="left:297px;top:603px;width:69px;height:18px;border:1px solid #000"></div><div class="a" style="left:365px;top:603px;width:69px;height:18px;border:1px solid #000"></div><div class="a" style="left:433px;top:603px;width:69px;height:18px;border:1px solid #000"></div><div class="a" style="left:161px;top:620px;width:69px;height:18px;border:1px solid #000"></div><div class="a" style="left:229px;top:620px;width:69px;height:18px;border:1px solid #000"></div><div class="a" style="left:297px;top:620px;width:69px;height:18px;border:1px solid #000"></div><div class="a" style="left:365px;top:620px;width:69px;height:18px;border:1px solid #000"></div><div class="a" style="left:433px;top:620px;width:69px;height:18px;border:1px solid #000"></div><div class="a" style="left:161px;top:637px;width:69px;height:18px;border:1px solid #000"></div><div class="a" style="left:229px;top:637px;width:69px;height:18px;border:1px solid #000"></div><div class="a" style="left:297px;top:637px;width:69px;height:18px;border:1px solid #000"></div><div class="a" style="left:365px;top:637px;width:69px;height:18px;border:1px solid #000"></div><div class="a" style="left:433px;top:637px;width:69px;height:18px;border:1px solid #000"></div><div class="a" style="left:161px;top:654px;width:69px;height:18px;border:1px solid #000"></div><div class="a" style="left:229px;top:654px;width:69px;height:18px;border:1px solid #000"></div><div class="a" style="left:297px;top:654px;width:69px;height:18px;border:1px solid #000"></div><div class="a" style="left:365px;top:654px;width:69px;height:18px;border:1px solid #000"></div><div class="a" style="left:433px;top:654px;width:69px;height:18px;border:1px solid #000"></div><div class="a" style="left:161px;top:671px;width:69px;height:18px;border:1px solid #000"></div><div class="a" style="left:229px;top:671px;width:69px;height:18px;border:1px solid #000"></div><div class="a" style="left:297px;top:671px;width:69px;height:18px;border:1px solid #000"></div><div class="a" style="left:365px;top:671px;width:69px;height:18px;border:1px solid #000"></div><div class="a" style="left:433px;top:671px;width:69px;height:18px;border:1px solid #000"></div><div class="a" style="left:161px;top:688px;width:69px;height:18px;border:1px solid #000"></div><div class="a" style="left:229px;top:688px;width:69px;height:18px;border:1px solid #000"></div><div class="a" style="left:297px;top:688px;width:69px;height:18px;border:1px solid #000"></div><div class="a" style="left:365px;top:688px;width:69px;height:18px;border:1px solid #000"></div><div class="a" style="left:433px;top:688px;width:69px;height:18px;border:1px solid #000"></div><div class="a" style="left:161px;top:705px;width:69px;height:18px;border:1px solid #000"></div><div class="a" style="left:229px;top:705px;width:69px;height:18px;border:1px solid #000"></div><div class="a" style="left:297px;top:705px;width:69px;height:18px;border:1px solid #000"></div><div class="a" style="left:365px;top:705px;width:69px;height:18px;border:1px solid #000"></div><div class="a" style="left:433px;top:705px;width:69px;height:18px;border:1px solid #000"></div><div class="a" style="left:161px;top:722px;width:69px;height:18px;border:1px solid #000"></div><div class="a" style="left:229px;top:722px;width:69px;height:18px;border:1px solid #000"></div><div class="a" style="left:297px;top:722px;width:69px;height:18px;border:1px solid #000"></div><div class="a" style="left:365px;top:722px;width:69px;height:18px;border:1px solid #000"></div><div class="a" style="left:433px;top:722px;width:69px;height:18px;border:1px solid #000"></div><div class="a" style="left:161px;top:739px;width:69px;height:18px;border:1px solid #000"></div><div class="a" style="left:229px;top:739px;width:69px;height:18px;border:1px solid #000"></div><div class="a" style="left:297px;top:739px;width:69px;height:18px;border:1px solid #000"></div><div class="a" style="left:365px;top:739px;width:69px;height:18px;border:1px solid #000"></div><div class="a" style="left:433px;top:739px;width:69px;height:18px;border:1px solid #000"></div><div class="a" style="left:161px;top:756px;width:69px;height:18px;border:1px solid #000"></div><div class="a" style="left:229px;top:756px;width:69px;height:18px;border:1px solid #000"></div><div class="a" style="left:297px;top:756px;width:69px;height:18px;border:1px solid #000"></div><div class="a" style="left:365px;top:756px;width:69px;height:18px;border:1px solid #000"></div><div class="a" style="left:433px;top:756px;width:69px;height:18px;border:1px solid #000"></div><div class="a" style="left:161px;top:773px;width:69px;height:18px;border:1px solid #000"></div><div class="a" style="left:229px;top:773px;width:69px;height:18px;border:1px solid #000"></div><div class="a" style="left:297px;top:773px;width:69px;height:18px;border:1px solid #000"></div><div class="a" style="left:365px;top:773px;width:69px;height:18px;border:1px solid #000"></div><div class="a" style="left:433px;top:773px;width:69px;height:18px;border:1px solid #000"></div><div class="a" style="left:161px;top:790px;width:69px;height:18px;border:1px solid #000"></div><div class="a" style="left:229px;top:790px;width:69px;height:18px;border:1px solid #000"></div><div class="a" style="left:297px;top:790px;width:69px;height:18px;border:1px solid #000"></div><div class="a" style="left:365px;top:790px;width:69px;height:18px;border:1px solid #000"></div><div class="a" style="left:433px;top:790px;width:69px;height:18px;border:1px solid #000"></div><div class="a" style="left:161px;top:807px;width:69px;height:18px;border:1px solid #000"></div><div class="a" style="left:229px;top:807px;width:69px;height:18px;border:1px solid #000"></div><div class="a" style="left:297px;top:807px;width:69px;height:18px;border:1px solid #000"></div><div class="a" style="left:365px;top:807px;width:69px;height:18px;border:1px solid #000"></div><div class="a" style="left:433px;top:807px;width:69px;height:18px;border:1px solid #000"></div><div class="a" style="left:161px;top:824px;width:69px;height:18px;border:1px solid #000"></div><div class="a" style="left:229px;top:824px;width:69px;height:18px;border:1px solid #000"></div><div class="a" style="left:297px;top:824px;width:69px;height:18px;border:1px solid #000"></div><div class="a" style="left:365px;top:824px;width:69px;height:18px;border:1px solid #000"></div><div class="a" style="left:433px;top:824px;width:69px;height:18px;border:1px solid #000"></div><div class="a" style="left:570px;top:315px;width:0;height:0;border-top:5px solid #0b8a21;border-right:5px solid transparent"></div><div class="a" style="left:570px;top:349px;width:0;height:0;border-top:5px solid #0b8a21;border-right:5px solid transparent"></div><div class="a" style="left:570px;top:383px;width:0;height:0;border-top:5px solid #0b8a21;border-right:5px solid transparent"></div><div class="a" style="left:570px;top:417px;width:0;height:0;border-top:5px solid #0b8a21;border-right:5px solid transparent"></div><div class="a" style="left:570px;top:451px;width:0;height:0;border-top:5px solid #0b8a21;border-right:5px solid transparent"></div><div class="a" style="left:570px;top:485px;width:0;height:0;border-top:5px solid #0b8a21;border-right:5px solid transparent"></div><div class="a" style="left:570px;top:519px;width:0;height:0;border-top:5px solid #0b8a21;border-right:5px solid transparent"></div><div class="a" style="left:570px;top:553px;width:0;height:0;border-top:5px solid #0b8a21;border-right:5px solid transparent"></div><div class="a" style="left:570px;top:587px;width:0;height:0;border-top:5px solid #0b8a21;border-right:5px solid transparent"></div><div class="a" style="left:570px;top:621px;width:0;height:0;border-top:5px solid #0b8a21;border-right:5px solid transparent"></div><div class="a" style="left:570px;top:655px;width:0;height:0;border-top:5px solid #0b8a21;border-right:5px solid transparent"></div><div class="a" style="left:570px;top:689px;width:0;height:0;border-top:5px solid #0b8a21;border-right:5px solid transparent"></div><div class="a" style="left:570px;top:723px;width:0;height:0;border-top:5px solid #0b8a21;border-right:5px solid transparent"></div><div class="a" style="left:570px;top:757px;width:0;height:0;border-top:5px solid #0b8a21;border-right:5px solid transparent"></div><div class="a" style="left:570px;top:791px;width:0;height:0;border-top:5px solid #0b8a21;border-right:5px solid transparent"></div><div class="a" style="left:570px;top:825px;width:0;height:0;border-top:5px solid #0b8a21;border-right:5px solid transparent"></div><div class="cell" style="left:298px;top:196px;width:67px;padding-left:3px;">calculateur</div><div class="cell" style="left:162px;top:213px;width:67px;padding-left:3px;">C</div><div class="cell" style="left:230px;top:213px;width:67px;padding-left:3px;">M</div><div class="cell" style="left:298px;top:213px;width:67px;padding-left:3px;">Y</div><div class="cell" style="left:366px;top:213px;width:67px;padding-left:3px;">K</div><div class="cell" style="left:434px;top:213px;width:67px;padding-left:3px;">TOTAL</div><div class="cell" style="left:502px;top:213px;width:67px;padding-left:3px;">Courbe brut</div><div class="cell" style="left:570px;top:213px;width:98px;padding-left:3px;">Ecart type moyen</div><div class="cell" style="left:836px;top:213px;width:67px;padding-left:3px;">Reel</div><div class="cell" style="left:904px;top:213px;width:67px;padding-left:3px;">diff -</div><div class="cell" style="left:669px;top:213px;width:98px;text-align:right;padding-right:2px;">10</div><div class="cell" style="left:768px;top:213px;width:67px;text-align:right;padding-right:2px;">1</div><div class="cell" style="left:94px;top:230px;width:67px;padding-left:3px;">P37 14C</div><div class="cell" style="left:162px;top:230px;width:67px;text-align:right;padding-right:2px;">0,00</div><div class="cell" style="left:230px;top:230px;width:67px;text-align:right;padding-right:2px;">61,00</div><div class="cell" style="left:298px;top:230px;width:67px;text-align:right;padding-right:2px;">73,00</div><div class="cell" style="left:366px;top:230px;width:67px;text-align:right;padding-right:2px;">10,00</div><div class="cell" style="left:434px;top:230px;width:67px;text-align:right;padding-right:2px;">144,00</div><div class="cell" style="left:502px;top:230px;width:67px;text-align:right;padding-right:2px;">0,76</div><div class="cell" style="left:570px;top:230px;width:98px;text-align:right;padding-right:2px;">31,49</div><div class="cell" style="left:669px;top:230px;width:98px;text-align:right;padding-right:2px;">41,49</div><div class="cell" style="left:768px;top:230px;width:67px;text-align:right;padding-right:2px;">32,14</div><div class="cell" style="left:836px;top:230px;width:67px;text-align:right;padding-right:2px;">0,83</div><div class="cell" style="left:904px;top:230px;width:67px;text-align:right;padding-right:2px;">31,31</div><div class="cell" style="left:94px;top:247px;width:67px;padding-left:3px;">P13 9C</div><div class="cell" style="left:162px;top:247px;width:67px;text-align:right;padding-right:2px;">40,00</div><div class="cell" style="left:230px;top:247px;width:67px;text-align:right;padding-right:2px;">42,00</div><div class="cell" style="left:298px;top:247px;width:67px;text-align:right;padding-right:2px;">63,00</div><div class="cell" style="left:366px;top:247px;width:67px;text-align:right;padding-right:2px;">9,00</div><div class="cell" style="left:434px;top:247px;width:67px;text-align:right;padding-right:2px;">154,00</div><div class="cell" style="left:502px;top:247px;width:67px;text-align:right;padding-right:2px;">0,83</div><div class="cell" style="left:570px;top:247px;width:98px;text-align:right;padding-right:2px;">19,27</div><div class="cell" style="left:669px;top:247px;width:98px;text-align:right;padding-right:2px;">29,27</div><div class="cell" style="left:768px;top:247px;width:67px;text-align:right;padding-right:2px;">25,02</div><div class="cell" style="left:836px;top:247px;width:67px;text-align:right;padding-right:2px;">0,66</div><div class="cell" style="left:904px;top:247px;width:67px;text-align:right;padding-right:2px;">24,36</div><div class="cell" style="left:94px;top:264px;width:67px;padding-left:3px;">P149 15C</div><div class="cell" style="left:162px;top:264px;width:67px;text-align:right;padding-right:2px;">72,00</div><div class="cell" style="left:230px;top:264px;width:67px;text-align:right;padding-right:2px;">0,00</div><div class="cell" style="left:298px;top:264px;width:67px;text-align:right;padding-right:2px;">90,00</div><div class="cell" style="left:366px;top:264px;width:67px;text-align:right;padding-right:2px;">31,00</div><div class="cell" style="left:434px;top:264px;width:67px;text-align:right;padding-right:2px;">193,00</div><div class="cell" style="left:502px;top:264px;width:67px;text-align:right;padding-right:2px;">1,08</div><div class="cell" style="left:570px;top:264px;width:98px;text-align:right;padding-right:2px;">35,12</div><div class="cell" style="left:669px;top:264px;width:98px;text-align:right;padding-right:2px;">45,12</div><div class="cell" style="left:768px;top:264px;width:67px;text-align:right;padding-right:2px;">49,80</div><div class="cell" style="left:836px;top:264px;width:67px;text-align:right;padding-right:2px;">1,14</div><div class="cell" style="left:904px;top:264px;width:67px;text-align:right;padding-right:2px;">48,66</div><div class="cell" style="left:94px;top:281px;width:67px;padding-left:3px;">P147 16C</div><div class="cell" style="left:162px;top:281px;width:67px;text-align:right;padding-right:2px;">88,00</div><div class="cell" style="left:230px;top:281px;width:67px;text-align:right;padding-right:2px;">0,00</div><div class="cell" style="left:298px;top:281px;width:67px;text-align:right;padding-right:2px;">100,00</div><div class="cell" style="left:366px;top:281px;width:67px;text-align:right;padding-right:2px;">60,00</div><div class="cell" style="left:434px;top:281px;width:67px;text-align:right;padding-right:2px;">248,00</div><div class="cell" style="left:502px;top:281px;width:67px;text-align:right;padding-right:2px;">1,33</div><div class="cell" style="left:570px;top:281px;width:98px;text-align:right;padding-right:2px;">38,63</div><div class="cell" style="left:669px;top:281px;width:98px;text-align:right;padding-right:2px;">48,63</div><div class="cell" style="left:768px;top:281px;width:67px;text-align:right;padding-right:2px;">65,77</div><div class="cell" style="left:836px;top:281px;width:67px;text-align:right;padding-right:2px;">1,42</div><div class="cell" style="left:904px;top:281px;width:67px;text-align:right;padding-right:2px;">64,35</div><div class="cell" style="left:94px;top:298px;width:67px;padding-left:3px;">P116 1C</div><div class="cell" style="left:162px;top:298px;width:67px;text-align:right;padding-right:2px;">22,00</div><div class="cell" style="left:230px;top:298px;width:67px;text-align:right;padding-right:2px;">0,00</div><div class="cell" style="left:298px;top:298px;width:67px;text-align:right;padding-right:2px;">0,00</div><div class="cell" style="left:366px;top:298px;width:67px;text-align:right;padding-right:2px;">5,00</div><div class="cell" style="left:434px;top:298px;width:67px;text-align:right;padding-right:2px;">27,00</div><div class="cell" style="left:502px;top:298px;width:67px;text-align:right;padding-right:2px;">0,16</div><div class="cell" style="left:570px;top:298px;width:98px;text-align:right;padding-right:2px;">9,04</div><div class="cell" style="left:669px;top:298px;width:98px;text-align:right;padding-right:2px;">19,04</div><div class="cell" style="left:768px;top:298px;width:67px;text-align:right;padding-right:2px;">3,11</div><div class="cell" style="left:836px;top:298px;width:67px;text-align:right;padding-right:2px;">0,08</div><div class="cell" style="left:904px;top:298px;width:67px;text-align:right;padding-right:2px;">3,03</div><div class="cell" style="left:230px;top:315px;width:67px;text-align:center;">25,00</div><div class="cell" style="left:434px;top:315px;width:67px;text-align:center;">25,00</div><div class="cell" style="left:502px;top:315px;width:67px;text-align:right;padding-right:2px;">0,15</div><div class="cell" style="left:570px;top:315px;width:98px;text-align:right;padding-right:2px;">0,00</div><div class="cell" style="left:669px;top:315px;width:98px;text-align:right;padding-right:2px;">10,00</div><div class="cell" style="left:768px;top:315px;width:67px;text-align:right;padding-right:2px;">1,65</div><div class="cell" style="left:836px;top:315px;width:67px;text-align:center;">0,11</div><div class="cell" style="left:904px;top:315px;width:67px;text-align:right;padding-right:2px;">1,54</div><div class="cell" style="left:162px;top:332px;width:67px;text-align:center;">6,25</div><div class="cell" style="left:230px;top:332px;width:67px;text-align:center;">6,25</div><div class="cell" style="left:298px;top:332px;width:67px;text-align:center;">6,25</div><div class="cell" style="left:366px;top:332px;width:67px;text-align:center;color:#fff;">6,25</div><div class="cell" style="left:434px;top:332px;width:67px;text-align:center;">25,00</div><div class="cell" style="left:502px;top:332px;width:67px;text-align:right;padding-right:2px;">0,15</div><div class="cell" style="left:570px;top:332px;width:98px;text-align:right;padding-right:2px;">0,00</div><div class="cell" style="left:669px;top:332px;width:98px;text-align:right;padding-right:2px;">10,00</div><div class="cell" style="left:768px;top:332px;width:67px;text-align:right;padding-right:2px;">1,65</div><div class="cell" style="left:836px;top:332px;width:67px;text-align:center;">0,08</div><div class="cell" style="left:904px;top:332px;width:67px;text-align:right;padding-right:2px;">1,57</div><div class="cell" style="left:230px;top:349px;width:67px;text-align:center;">50,00</div><div class="cell" style="left:434px;top:349px;width:67px;text-align:center;">50,00</div><div class="cell" style="left:502px;top:349px;width:67px;text-align:right;padding-right:2px;">0,23</div><div class="cell" style="left:570px;top:349px;width:98px;text-align:right;padding-right:2px;">0,00</div><div class="cell" style="left:669px;top:349px;width:98px;text-align:right;padding-right:2px;">10,00</div><div class="cell" style="left:768px;top:349px;width:67px;text-align:right;padding-right:2px;">2,48</div><div class="cell" style="left:836px;top:349px;width:67px;text-align:center;">0,28</div><div class="cell" style="left:904px;top:349px;width:67px;text-align:right;padding-right:2px;">2,20</div><div class="cell" style="left:162px;top:366px;width:67px;text-align:center;">12,50</div><div class="cell" style="left:230px;top:366px;width:67px;text-align:center;">12,50</div><div class="cell" style="left:298px;top:366px;width:67px;text-align:center;">12,50</div><div class="cell" style="left:366px;top:366px;width:67px;text-align:center;color:#fff;">12,50</div><div class="cell" style="left:434px;top:366px;width:67px;text-align:center;">50,00</div><div class="cell" style="left:502px;top:366px;width:67px;text-align:right;padding-right:2px;">0,23</div><div class="cell" style="left:570px;top:366px;width:98px;text-align:right;padding-right:2px;">0,00</div><div class="cell" style="left:669px;top:366px;width:98px;text-align:right;padding-right:2px;">10,00</div><div class="cell" style="left:768px;top:366px;width:67px;text-align:right;padding-right:2px;">2,48</div><div class="cell" style="left:836px;top:366px;width:67px;text-align:center;">0,08</div><div class="cell" style="left:904px;top:366px;width:67px;text-align:right;padding-right:2px;">2,40</div><div class="cell" style="left:230px;top:383px;width:67px;text-align:center;">75,00</div><div class="cell" style="left:434px;top:383px;width:67px;text-align:center;">75,00</div><div class="cell" style="left:502px;top:383px;width:67px;text-align:right;padding-right:2px;">0,33</div><div class="cell" style="left:570px;top:383px;width:98px;text-align:right;padding-right:2px;">0,00</div><div class="cell" style="left:669px;top:383px;width:98px;text-align:right;padding-right:2px;">10,00</div><div class="cell" style="left:768px;top:383px;width:67px;text-align:right;padding-right:2px;">3,62</div><div class="cell" style="left:836px;top:383px;width:67px;text-align:center;">0,53</div><div class="cell" style="left:904px;top:383px;width:67px;text-align:right;padding-right:2px;">3,09</div><div class="cell" style="left:162px;top:400px;width:67px;text-align:center;">18,75</div><div class="cell" style="left:230px;top:400px;width:67px;text-align:center;">18,75</div><div class="cell" style="left:298px;top:400px;width:67px;text-align:center;">18,75</div><div class="cell" style="left:366px;top:400px;width:67px;text-align:center;color:#fff;">18,75</div><div class="cell" style="left:434px;top:400px;width:67px;text-align:center;">75,00</div><div class="cell" style="left:502px;top:400px;width:67px;text-align:right;padding-right:2px;">0,33</div><div class="cell" style="left:570px;top:400px;width:98px;text-align:right;padding-right:2px;">0,00</div><div class="cell" style="left:669px;top:400px;width:98px;text-align:right;padding-right:2px;">10,00</div><div class="cell" style="left:768px;top:400px;width:67px;text-align:right;padding-right:2px;">3,62</div><div class="cell" style="left:836px;top:400px;width:67px;text-align:center;">0,14</div><div class="cell" style="left:904px;top:400px;width:67px;text-align:right;padding-right:2px;">3,48</div><div class="cell" style="left:230px;top:417px;width:67px;text-align:center;">100,00</div><div class="cell" style="left:434px;top:417px;width:67px;text-align:center;">100,00</div><div class="cell" style="left:502px;top:417px;width:67px;text-align:right;padding-right:2px;">0,46</div><div class="cell" style="left:570px;top:417px;width:98px;text-align:right;padding-right:2px;">0,00</div><div class="cell" style="left:669px;top:417px;width:98px;text-align:right;padding-right:2px;">10,00</div><div class="cell" style="left:768px;top:417px;width:67px;text-align:right;padding-right:2px;">5,10</div><div class="cell" style="left:836px;top:417px;width:67px;text-align:center;">0,88</div><div class="cell" style="left:904px;top:417px;width:67px;text-align:right;padding-right:2px;">4,22</div><div class="cell" style="left:162px;top:434px;width:67px;text-align:center;">25,00</div><div class="cell" style="left:230px;top:434px;width:67px;text-align:center;">25,00</div><div class="cell" style="left:298px;top:434px;width:67px;text-align:center;">25,00</div><div class="cell" style="left:366px;top:434px;width:67px;text-align:center;color:#fff;">25,00</div><div class="cell" style="left:434px;top:434px;width:67px;text-align:center;">100,00</div><div class="cell" style="left:502px;top:434px;width:67px;text-align:right;padding-right:2px;">0,46</div><div class="cell" style="left:570px;top:434px;width:98px;text-align:right;padding-right:2px;">0,00</div><div class="cell" style="left:669px;top:434px;width:98px;text-align:right;padding-right:2px;">10,00</div><div class="cell" style="left:768px;top:434px;width:67px;text-align:right;padding-right:2px;">5,10</div><div class="cell" style="left:836px;top:434px;width:67px;text-align:center;">0,22</div><div class="cell" style="left:904px;top:434px;width:67px;text-align:right;padding-right:2px;">4,88</div><div class="cell" style="left:230px;top:451px;width:67px;text-align:center;">100,00</div><div class="cell" style="left:298px;top:451px;width:67px;text-align:center;">25,00</div><div class="cell" style="left:434px;top:451px;width:67px;text-align:center;">125,00</div><div class="cell" style="left:502px;top:451px;width:67px;text-align:right;padding-right:2px;">0,62</div><div class="cell" style="left:570px;top:451px;width:98px;text-align:right;padding-right:2px;">37,50</div><div class="cell" style="left:669px;top:451px;width:98px;text-align:right;padding-right:2px;">47,50</div><div class="cell" style="left:768px;top:451px;width:67px;text-align:right;padding-right:2px;">30,27</div><div class="cell" style="left:836px;top:451px;width:67px;text-align:center;">0,92</div><div class="cell" style="left:904px;top:451px;width:67px;text-align:right;padding-right:2px;">29,35</div><div class="cell" style="left:162px;top:468px;width:67px;text-align:center;">31,25</div><div class="cell" style="left:230px;top:468px;width:67px;text-align:center;">31,25</div><div class="cell" style="left:298px;top:468px;width:67px;text-align:center;">31,25</div><div class="cell" style="left:366px;top:468px;width:67px;text-align:center;color:#fff;">31,25</div><div class="cell" style="left:434px;top:468px;width:67px;text-align:center;">125,00</div><div class="cell" style="left:502px;top:468px;width:67px;text-align:right;padding-right:2px;">0,62</div><div class="cell" style="left:570px;top:468px;width:98px;text-align:right;padding-right:2px;">0,00</div><div class="cell" style="left:669px;top:468px;width:98px;text-align:right;padding-right:2px;">10,00</div><div class="cell" style="left:768px;top:468px;width:67px;text-align:right;padding-right:2px;">6,87</div><div class="cell" style="left:836px;top:468px;width:67px;text-align:center;">0,36</div><div class="cell" style="left:904px;top:468px;width:67px;text-align:right;padding-right:2px;">6,51</div><div class="cell" style="left:230px;top:485px;width:67px;text-align:center;">100,00</div><div class="cell" style="left:298px;top:485px;width:67px;text-align:center;">50,00</div><div class="cell" style="left:434px;top:485px;width:67px;text-align:center;">150,00</div><div class="cell" style="left:502px;top:485px;width:67px;text-align:right;padding-right:2px;">0,80</div><div class="cell" style="left:570px;top:485px;width:98px;text-align:right;padding-right:2px;">25,00</div><div class="cell" style="left:669px;top:485px;width:98px;text-align:right;padding-right:2px;">35,00</div><div class="cell" style="left:768px;top:485px;width:67px;text-align:right;padding-right:2px;">28,75</div><div class="cell" style="left:836px;top:485px;width:67px;text-align:center;">1,05</div><div class="cell" style="left:904px;top:485px;width:67px;text-align:right;padding-right:2px;">27,70</div><div class="cell" style="left:162px;top:502px;width:67px;text-align:center;">37,50</div><div class="cell" style="left:230px;top:502px;width:67px;text-align:center;">37,50</div><div class="cell" style="left:298px;top:502px;width:67px;text-align:center;">37,50</div><div class="cell" style="left:366px;top:502px;width:67px;text-align:center;color:#fff;">37,50</div><div class="cell" style="left:434px;top:502px;width:67px;text-align:center;">150,00</div><div class="cell" style="left:502px;top:502px;width:67px;text-align:right;padding-right:2px;">0,80</div><div class="cell" style="left:570px;top:502px;width:98px;text-align:right;padding-right:2px;">0,00</div><div class="cell" style="left:669px;top:502px;width:98px;text-align:right;padding-right:2px;">10,00</div><div class="cell" style="left:768px;top:502px;width:67px;text-align:right;padding-right:2px;">8,78</div><div class="cell" style="left:836px;top:502px;width:67px;text-align:center;">0,50</div><div class="cell" style="left:904px;top:502px;width:67px;text-align:right;padding-right:2px;">8,28</div><div class="cell" style="left:230px;top:519px;width:67px;text-align:center;">100,00</div><div class="cell" style="left:298px;top:519px;width:67px;text-align:center;">75,00</div><div class="cell" style="left:434px;top:519px;width:67px;text-align:center;">175,00</div><div class="cell" style="left:502px;top:519px;width:67px;text-align:right;padding-right:2px;">0,97</div><div class="cell" style="left:570px;top:519px;width:98px;text-align:right;padding-right:2px;">12,50</div><div class="cell" style="left:669px;top:519px;width:98px;text-align:right;padding-right:2px;">22,50</div><div class="cell" style="left:768px;top:519px;width:67px;text-align:right;padding-right:2px;">22,77</div><div class="cell" style="left:836px;top:519px;width:67px;text-align:center;">1,22</div><div class="cell" style="left:904px;top:519px;width:67px;text-align:right;padding-right:2px;">21,55</div><div class="cell" style="left:162px;top:536px;width:67px;text-align:center;">43,75</div><div class="cell" style="left:230px;top:536px;width:67px;text-align:center;">43,75</div><div class="cell" style="left:298px;top:536px;width:67px;text-align:center;">43,75</div><div class="cell" style="left:366px;top:536px;width:67px;text-align:center;color:#fff;">43,75</div><div class="cell" style="left:434px;top:536px;width:67px;text-align:center;">175,00</div><div class="cell" style="left:502px;top:536px;width:67px;text-align:right;padding-right:2px;">0,97</div><div class="cell" style="left:570px;top:536px;width:98px;text-align:right;padding-right:2px;">0,00</div><div class="cell" style="left:669px;top:536px;width:98px;text-align:right;padding-right:2px;">10,00</div><div class="cell" style="left:768px;top:536px;width:67px;text-align:right;padding-right:2px;">10,66</div><div class="cell" style="left:836px;top:536px;width:67px;text-align:center;">0,71</div><div class="cell" style="left:904px;top:536px;width:67px;text-align:right;padding-right:2px;">9,95</div><div class="cell" style="left:230px;top:553px;width:67px;text-align:center;">100,00</div><div class="cell" style="left:298px;top:553px;width:67px;text-align:center;">100,00</div><div class="cell" style="left:434px;top:553px;width:67px;text-align:center;">200,00</div><div class="cell" style="left:502px;top:553px;width:67px;text-align:right;padding-right:2px;">1,12</div><div class="cell" style="left:570px;top:553px;width:98px;text-align:right;padding-right:2px;">0,00</div><div class="cell" style="left:669px;top:553px;width:98px;text-align:right;padding-right:2px;">10,00</div><div class="cell" style="left:768px;top:553px;width:67px;text-align:right;padding-right:2px;">12,31</div><div class="cell" style="left:836px;top:553px;width:67px;text-align:center;">1,27</div><div class="cell" style="left:904px;top:553px;width:67px;text-align:right;padding-right:2px;">11,04</div><div class="cell" style="left:162px;top:570px;width:67px;text-align:center;">50,00</div><div class="cell" style="left:230px;top:570px;width:67px;text-align:center;">50,00</div><div class="cell" style="left:298px;top:570px;width:67px;text-align:center;">50,00</div><div class="cell" style="left:366px;top:570px;width:67px;text-align:center;color:#fff;">50,00</div><div class="cell" style="left:434px;top:570px;width:67px;text-align:center;">200,00</div><div class="cell" style="left:502px;top:570px;width:67px;text-align:right;padding-right:2px;">1,12</div><div class="cell" style="left:570px;top:570px;width:98px;text-align:right;padding-right:2px;">0,00</div><div class="cell" style="left:669px;top:570px;width:98px;text-align:right;padding-right:2px;">-31,00</div><div class="cell" style="left:768px;top:570px;width:67px;text-align:right;padding-right:2px;">-33,58</div><div class="cell" style="left:836px;top:570px;width:67px;text-align:center;">0,91</div><div class="cell" style="left:904px;top:570px;width:67px;text-align:right;padding-right:2px;">34,49</div><div class="cell" style="left:162px;top:587px;width:67px;text-align:center;">25,00</div><div class="cell" style="left:230px;top:587px;width:67px;text-align:center;">100,00</div><div class="cell" style="left:298px;top:587px;width:67px;text-align:center;">100,00</div><div class="cell" style="left:434px;top:587px;width:67px;text-align:center;">225,00</div><div class="cell" style="left:502px;top:587px;width:67px;text-align:right;padding-right:2px;">1,24</div><div class="cell" style="left:570px;top:587px;width:98px;text-align:right;padding-right:2px;">35,36</div><div class="cell" style="left:669px;top:587px;width:98px;text-align:right;padding-right:2px;">45,36</div><div class="cell" style="left:768px;top:587px;width:67px;text-align:right;padding-right:2px;">57,51</div><div class="cell" style="left:836px;top:587px;width:67px;text-align:center;">1,27</div><div class="cell" style="left:904px;top:587px;width:67px;text-align:right;padding-right:2px;">56,24</div><div class="cell" style="left:162px;top:604px;width:67px;text-align:center;">56,25</div><div class="cell" style="left:230px;top:604px;width:67px;text-align:center;">56,25</div><div class="cell" style="left:298px;top:604px;width:67px;text-align:center;">56,25</div><div class="cell" style="left:366px;top:604px;width:67px;text-align:center;color:#fff;">56,25</div><div class="cell" style="left:434px;top:604px;width:67px;text-align:center;">225,00</div><div class="cell" style="left:502px;top:604px;width:67px;text-align:right;padding-right:2px;">1,24</div><div class="cell" style="left:570px;top:604px;width:98px;text-align:right;padding-right:2px;">0,00</div><div class="cell" style="left:669px;top:604px;width:98px;text-align:right;padding-right:2px;">10,00</div><div class="cell" style="left:768px;top:604px;width:67px;text-align:right;padding-right:2px;">13,65</div><div class="cell" style="left:836px;top:604px;width:67px;text-align:center;">1,14</div><div class="cell" style="left:904px;top:604px;width:67px;text-align:right;padding-right:2px;">12,51</div><div class="cell" style="left:162px;top:621px;width:67px;text-align:center;">50,00</div><div class="cell" style="left:230px;top:621px;width:67px;text-align:center;">100,00</div><div class="cell" style="left:298px;top:621px;width:67px;text-align:center;">100,00</div><div class="cell" style="left:434px;top:621px;width:67px;text-align:center;">250,00</div><div class="cell" style="left:502px;top:621px;width:67px;text-align:right;padding-right:2px;">1,33</div><div class="cell" style="left:570px;top:621px;width:98px;text-align:right;padding-right:2px;">23,57</div><div class="cell" style="left:669px;top:621px;width:98px;text-align:right;padding-right:2px;">33,57</div><div class="cell" style="left:768px;top:621px;width:67px;text-align:right;padding-right:2px;">46,03</div><div class="cell" style="left:836px;top:621px;width:67px;text-align:center;">1,41</div><div class="cell" style="left:904px;top:621px;width:67px;text-align:right;padding-right:2px;">44,62</div><div class="cell" style="left:162px;top:638px;width:67px;text-align:center;">62,50</div><div class="cell" style="left:230px;top:638px;width:67px;text-align:center;">62,50</div><div class="cell" style="left:298px;top:638px;width:67px;text-align:center;">62,50</div><div class="cell" style="left:366px;top:638px;width:67px;text-align:center;color:#fff;">62,50</div><div class="cell" style="left:434px;top:638px;width:67px;text-align:center;">250,00</div><div class="cell" style="left:502px;top:638px;width:67px;text-align:right;padding-right:2px;">1,33</div><div class="cell" style="left:570px;top:638px;width:98px;text-align:right;padding-right:2px;">0,00</div><div class="cell" style="left:669px;top:638px;width:98px;text-align:right;padding-right:2px;">10,00</div><div class="cell" style="left:768px;top:638px;width:67px;text-align:right;padding-right:2px;">14,65</div><div class="cell" style="left:836px;top:638px;width:67px;text-align:center;">1,28</div><div class="cell" style="left:904px;top:638px;width:67px;text-align:right;padding-right:2px;">13,37</div><div class="cell" style="left:162px;top:655px;width:67px;text-align:center;">75,00</div><div class="cell" style="left:230px;top:655px;width:67px;text-align:center;">100,00</div><div class="cell" style="left:298px;top:655px;width:67px;text-align:center;">100,00</div><div class="cell" style="left:434px;top:655px;width:67px;text-align:center;">275,00</div><div class="cell" style="left:502px;top:655px;width:67px;text-align:right;padding-right:2px;">1,40</div><div class="cell" style="left:570px;top:655px;width:98px;text-align:right;padding-right:2px;">11,79</div><div class="cell" style="left:669px;top:655px;width:98px;text-align:right;padding-right:2px;">21,79</div><div class="cell" style="left:768px;top:655px;width:67px;text-align:right;padding-right:2px;">31,81</div><div class="cell" style="left:836px;top:655px;width:67px;text-align:center;">1,42</div><div class="cell" style="left:904px;top:655px;width:67px;text-align:right;padding-right:2px;">30,39</div><div class="cell" style="left:162px;top:672px;width:67px;text-align:center;">68,75</div><div class="cell" style="left:230px;top:672px;width:67px;text-align:center;">68,75</div><div class="cell" style="left:298px;top:672px;width:67px;text-align:center;">68,75</div><div class="cell" style="left:366px;top:672px;width:67px;text-align:center;color:#fff;">68,75</div><div class="cell" style="left:434px;top:672px;width:67px;text-align:center;">275,00</div><div class="cell" style="left:502px;top:672px;width:67px;text-align:right;padding-right:2px;">1,40</div><div class="cell" style="left:570px;top:672px;width:98px;text-align:right;padding-right:2px;">0,00</div><div class="cell" style="left:669px;top:672px;width:98px;text-align:right;padding-right:2px;">10,00</div><div class="cell" style="left:768px;top:672px;width:67px;text-align:right;padding-right:2px;">15,36</div><div class="cell" style="left:836px;top:672px;width:67px;text-align:center;">1,42</div><div class="cell" style="left:904px;top:672px;width:67px;text-align:right;padding-right:2px;">13,94</div><div class="cell" style="left:162px;top:689px;width:67px;text-align:center;">100,00</div><div class="cell" style="left:230px;top:689px;width:67px;text-align:center;">100,00</div><div class="cell" style="left:298px;top:689px;width:67px;text-align:center;">100,00</div><div class="cell" style="left:434px;top:689px;width:67px;text-align:center;">300,00</div><div class="cell" style="left:502px;top:689px;width:67px;text-align:right;padding-right:2px;">1,44</div><div class="cell" style="left:570px;top:689px;width:98px;text-align:right;padding-right:2px;">0,00</div><div class="cell" style="left:669px;top:689px;width:98px;text-align:right;padding-right:2px;">10,00</div><div class="cell" style="left:768px;top:689px;width:67px;text-align:right;padding-right:2px;">15,84</div><div class="cell" style="left:836px;top:689px;width:67px;text-align:center;">1,43</div><div class="cell" style="left:904px;top:689px;width:67px;text-align:right;padding-right:2px;">14,41</div><div class="cell" style="left:162px;top:706px;width:67px;text-align:center;">75,00</div><div class="cell" style="left:230px;top:706px;width:67px;text-align:center;">75,00</div><div class="cell" style="left:298px;top:706px;width:67px;text-align:center;">75,00</div><div class="cell" style="left:366px;top:706px;width:67px;text-align:center;color:#fff;">75,00</div><div class="cell" style="left:434px;top:706px;width:67px;text-align:center;">300,00</div><div class="cell" style="left:502px;top:706px;width:67px;text-align:right;padding-right:2px;">1,44</div><div class="cell" style="left:570px;top:706px;width:98px;text-align:right;padding-right:2px;">0,00</div><div class="cell" style="left:669px;top:706px;width:98px;text-align:right;padding-right:2px;">10,00</div><div class="cell" style="left:768px;top:706px;width:67px;text-align:right;padding-right:2px;">15,84</div><div class="cell" style="left:836px;top:706px;width:67px;text-align:center;">1,50</div><div class="cell" style="left:904px;top:706px;width:67px;text-align:right;padding-right:2px;">14,34</div><div class="cell" style="left:162px;top:723px;width:67px;text-align:center;">100,00</div><div class="cell" style="left:230px;top:723px;width:67px;text-align:center;">100,00</div><div class="cell" style="left:298px;top:723px;width:67px;text-align:center;">100,00</div><div class="cell" style="left:366px;top:723px;width:67px;text-align:center;color:#fff;">25,00</div><div class="cell" style="left:434px;top:723px;width:67px;text-align:center;">325,00</div><div class="cell" style="left:502px;top:723px;width:67px;text-align:right;padding-right:2px;">1,47</div><div class="cell" style="left:570px;top:723px;width:98px;text-align:right;padding-right:2px;">32,48</div><div class="cell" style="left:669px;top:723px;width:98px;text-align:right;padding-right:2px;">42,48</div><div class="cell" style="left:768px;top:723px;width:67px;text-align:right;padding-right:2px;">63,86</div><div class="cell" style="left:836px;top:723px;width:67px;text-align:center;">1,47</div><div class="cell" style="left:904px;top:723px;width:67px;text-align:right;padding-right:2px;">62,39</div><div class="cell" style="left:162px;top:740px;width:67px;text-align:center;">81,25</div><div class="cell" style="left:230px;top:740px;width:67px;text-align:center;">81,25</div><div class="cell" style="left:298px;top:740px;width:67px;text-align:center;">81,25</div><div class="cell" style="left:366px;top:740px;width:67px;text-align:center;color:#fff;">81,25</div><div class="cell" style="left:434px;top:740px;width:67px;text-align:center;">325,00</div><div class="cell" style="left:502px;top:740px;width:67px;text-align:right;padding-right:2px;">1,47</div><div class="cell" style="left:570px;top:740px;width:98px;text-align:right;padding-right:2px;">0,00</div><div class="cell" style="left:669px;top:740px;width:98px;text-align:right;padding-right:2px;">10,00</div><div class="cell" style="left:768px;top:740px;width:67px;text-align:right;padding-right:2px;">16,16</div><div class="cell" style="left:836px;top:740px;width:67px;text-align:center;">1,50</div><div class="cell" style="left:904px;top:740px;width:67px;text-align:right;padding-right:2px;">14,66</div><div class="cell" style="left:162px;top:757px;width:67px;text-align:center;">100,00</div><div class="cell" style="left:230px;top:757px;width:67px;text-align:center;">100,00</div><div class="cell" style="left:298px;top:757px;width:67px;text-align:center;">100,00</div><div class="cell" style="left:366px;top:757px;width:67px;text-align:center;color:#fff;">50,00</div><div class="cell" style="left:434px;top:757px;width:67px;text-align:center;">350,00</div><div class="cell" style="left:502px;top:757px;width:67px;text-align:right;padding-right:2px;">1,49</div><div class="cell" style="left:570px;top:757px;width:98px;text-align:right;padding-right:2px;">21,65</div><div class="cell" style="left:669px;top:757px;width:98px;text-align:right;padding-right:2px;">31,65</div><div class="cell" style="left:768px;top:757px;width:67px;text-align:right;padding-right:2px;">48,58</div><div class="cell" style="left:836px;top:757px;width:67px;text-align:center;">1,49</div><div class="cell" style="left:904px;top:757px;width:67px;text-align:right;padding-right:2px;">47,09</div><div class="cell" style="left:162px;top:774px;width:67px;text-align:center;">87,50</div><div class="cell" style="left:230px;top:774px;width:67px;text-align:center;">87,50</div><div class="cell" style="left:298px;top:774px;width:67px;text-align:center;">87,50</div><div class="cell" style="left:366px;top:774px;width:67px;text-align:center;color:#fff;">87,50</div><div class="cell" style="left:434px;top:774px;width:67px;text-align:center;">350,00</div><div class="cell" style="left:502px;top:774px;width:67px;text-align:right;padding-right:2px;">1,49</div><div class="cell" style="left:570px;top:774px;width:98px;text-align:right;padding-right:2px;">0,00</div><div class="cell" style="left:669px;top:774px;width:98px;text-align:right;padding-right:2px;">10,00</div><div class="cell" style="left:768px;top:774px;width:67px;text-align:right;padding-right:2px;">16,36</div><div class="cell" style="left:836px;top:774px;width:67px;text-align:center;">1,50</div><div class="cell" style="left:904px;top:774px;width:67px;text-align:right;padding-right:2px;">14,86</div><div class="cell" style="left:162px;top:791px;width:67px;text-align:center;">100,00</div><div class="cell" style="left:230px;top:791px;width:67px;text-align:center;">100,00</div><div class="cell" style="left:298px;top:791px;width:67px;text-align:center;">100,00</div><div class="cell" style="left:366px;top:791px;width:67px;text-align:center;color:#fff;">75,00</div><div class="cell" style="left:434px;top:791px;width:67px;text-align:center;">375,00</div><div class="cell" style="left:502px;top:791px;width:67px;text-align:right;padding-right:2px;">1,50</div><div class="cell" style="left:570px;top:791px;width:98px;text-align:right;padding-right:2px;">10,83</div><div class="cell" style="left:669px;top:791px;width:98px;text-align:right;padding-right:2px;">20,83</div><div class="cell" style="left:768px;top:791px;width:67px;text-align:right;padding-right:2px;">32,74</div><div class="cell" style="left:836px;top:791px;width:67px;text-align:center;">1,51</div><div class="cell" style="left:904px;top:791px;width:67px;text-align:right;padding-right:2px;">31,23</div><div class="cell" style="left:162px;top:808px;width:67px;text-align:center;">93,75</div><div class="cell" style="left:230px;top:808px;width:67px;text-align:center;">93,75</div><div class="cell" style="left:298px;top:808px;width:67px;text-align:center;">93,75</div><div class="cell" style="left:366px;top:808px;width:67px;text-align:center;color:#fff;">93,75</div><div class="cell" style="left:434px;top:808px;width:67px;text-align:center;">375,00</div><div class="cell" style="left:502px;top:808px;width:67px;text-align:right;padding-right:2px;">1,50</div><div class="cell" style="left:570px;top:808px;width:98px;text-align:right;padding-right:2px;">0,00</div><div class="cell" style="left:669px;top:808px;width:98px;text-align:right;padding-right:2px;">10,00</div><div class="cell" style="left:768px;top:808px;width:67px;text-align:right;padding-right:2px;">16,50</div><div class="cell" style="left:836px;top:808px;width:67px;text-align:center;">1,50</div><div class="cell" style="left:904px;top:808px;width:67px;text-align:right;padding-right:2px;">15,00</div><div class="cell" style="left:162px;top:825px;width:67px;text-align:center;">100,00</div><div class="cell" style="left:230px;top:825px;width:67px;text-align:center;">100,00</div><div class="cell" style="left:298px;top:825px;width:67px;text-align:center;">100,00</div><div class="cell" style="left:366px;top:825px;width:67px;text-align:center;color:#fff;">100,00</div><div class="cell" style="left:434px;top:825px;width:67px;text-align:center;">400,00</div><div class="cell" style="left:502px;top:825px;width:67px;text-align:right;padding-right:2px;">1,51</div><div class="cell" style="left:570px;top:825px;width:98px;text-align:right;padding-right:2px;">0,00</div><div class="cell" style="left:669px;top:825px;width:98px;text-align:right;padding-right:2px;">10,00</div><div class="cell" style="left:768px;top:825px;width:67px;text-align:right;padding-right:2px;">16,58</div><div class="cell" style="left:836px;top:825px;width:67px;text-align:center;">1,42</div><div class="cell" style="left:904px;top:825px;width:67px;text-align:right;padding-right:2px;">15,16</div><div class="cell" style="left:904px;top:842px;width:67px;text-align:right;padding-right:2px;">20,67</div><div class="a" style="left:1033px;top:179px;width:7px;height:774px;background:#dfe6df"></div><div class="a" style="left:1026px;top:51px;width:14px;height:45px;background:#e3e9e3"></div><div class="a" style="left:1034px;top:51px;width:6px;height:60px;background:#d3d3d3"></div><div class="a" style="left:1029px;top:147px;width:11px;height:31px;background:#d3d6d3"></div><div class="a" style="left:1034px;top:955px;width:6px;height:32px;background:#d0d0d0"></div><div class="a" style="left:0;top:953px;width:1040px;height:35px;background:#e3e9e3;border-top:1px solid #c6c6c6;border-bottom:1px solid #d0d0d0"></div><div class="a" style="left:29px;top:964px;width:0;height:0;border-top:6px solid transparent;border-bottom:6px solid transparent;border-right:6px solid #c0c0c0"></div><div class="a" style="left:63px;top:964px;width:0;height:0;border-top:6px solid transparent;border-bottom:6px solid transparent;border-left:6px solid #c0c0c0"></div><div class="a" style="left:118px;top:953px;width:81px;height:32px;background:#fbf9fc;border-left:1px solid #c6c6c6;border-right:1px solid #c6c6c6;border-bottom:2px solid #237347"></div><div class="a" style="left:118px;top:956px;width:81px;text-align:center;font-size:19px;font-weight:bold;color:#237347;line-height:24px">Feuil1</div><svg class="a" style="left:237px;top:958px" width="24" height="24" viewBox="0 0 24 24"><circle cx="12" cy="12" r="10.5" fill="none" stroke="#8a8a8a" stroke-width="1.3"/><path d="M12 6.5v11M6.5 12h11" stroke="#666" stroke-width="1.5"/></svg><div class="a" style="left:0;top:988px;width:1040px;height:32px;background:#fbf9fc;border-top:1px solid #d0d0d0"></div><div class="a" style="left:11px;top:993px;font-size:16px;color:#555;line-height:24px">Prêt</div><svg class="a" style="left:80px;top:994px" width="22" height="20" viewBox="0 0 22 20" fill="none" stroke="#555" stroke-width="1.3"><path d="M1 1h19v5M1 1v17h6M3 5h14M3 9h4M3 13h4"/><circle cx="14" cy="13" r="5.5"/><circle cx="14" cy="13" r="2.5" fill="#555"/></svg><div class="a" style="left:1040px;top:0;width:880px;height:1020px;background:#fbf9fc;border-left:1px solid #6e6e6e"></div><div class="a" style="left:1040px;top:0;width:100px;height:2px;background:#1a1a1a"></div><div class="a" style="left:1140px;top:0;width:780px;height:1px;background:#1e3a2a"></div><svg class="a" style="left:1045px;top:2px" width="40" height="40" viewBox="1045 2 40 40">
<rect x="1056.8" y="16.6" width="17.6" height="16.6" fill="#fff" stroke="#000" stroke-width="1.4"/>
<rect x="1056.8" y="16.3" width="17.6" height="3.4" fill="#00f0f0" stroke="#1010a0" stroke-width="1"/>
<g fill="#b0b0b0"><circle cx="1059.4" cy="21.6" r=".6"/><circle cx="1062.4" cy="21.6" r=".6"/><circle cx="1065.4" cy="21.6" r=".6"/><circle cx="1068.3" cy="21.6" r=".6"/><circle cx="1071.5" cy="21.6" r=".6"/>
<circle cx="1059.4" cy="24.5" r=".6"/><circle cx="1062.4" cy="24.5" r=".6"/><circle cx="1065.4" cy="24.5" r=".6"/><circle cx="1068.3" cy="24.5" r=".6"/><circle cx="1071.5" cy="24.5" r=".6"/>
<circle cx="1059.4" cy="27.5" r=".6"/><circle cx="1062.4" cy="27.5" r=".6"/><circle cx="1065.4" cy="27.5" r=".6"/><circle cx="1068.3" cy="27.5" r=".6"/><circle cx="1071.5" cy="27.5" r=".6"/>
<circle cx="1059.4" cy="30.5" r=".6"/><circle cx="1062.4" cy="30.5" r=".6"/><circle cx="1065.4" cy="30.5" r=".6"/><circle cx="1068.3" cy="30.5" r=".6"/><circle cx="1071.5" cy="30.5" r=".6"/></g>
<path d="M1058 10.5h4.5l3 3.5v3l-2 1h-2.5l-3.5-4h-1.5v-2z" fill="#e8003a" stroke="#000" stroke-width="1"/>
<path d="M1052 20.5l2-1h6.5v3l-2.5 3h-5.5l-1.5-2.5z" fill="#f0f000" stroke="#000" stroke-width="1"/><path d="M1053 23h7l-2 2.5h-5z" fill="#909020"/>
</svg><div class="a" style="left:1081px;top:12px;font-size:17.3px;color:#000;line-height:24px;white-space:nowrap">Microsoft Visual Basic pour Applications - ENCRE.xlsx - [Feuil1 (Code)]</div><div class="a" style="left:1816px;top:22px;width:15px;height:1px;background:#000"></div><div class="a" style="left:1885px;top:15px;width:15px;height:15px;border:1px solid #000"></div><div class="a" style="left:1048px;top:51px;width:3px;height:45px;background-image:repeating-linear-gradient(#b8b8b8 0 3px,transparent 3px 6px)"></div><svg class="a" style="left:1045px;top:45px" width="40" height="40" viewBox="1045 45 40 40">
<rect x="1059" y="54.8" width="21" height="18.2" fill="#fff" stroke="#000" stroke-width="1.6"/>
<rect x="1058.2" y="54" width="22.6" height="3" fill="#8a8a8a"/>
<path d="M1062.5 58v11" stroke="#000" stroke-width="1.4"/><path d="M1076.5 58v11" stroke="#000" stroke-width="1.4"/>
<path d="M1062.5 58.5h14v12h-14z" fill="#c8c8c8"/><path d="M1062.5 58.5h14" stroke="#9a9a9a"/>
<path d="M1066 56.5l4-3.5l4.5 4l-3 4.5l-2.5 1.5l-3-3z" fill="#f000f0" stroke="#000" stroke-width=".9"/>
<path d="M1056.5 69l3.5-3h3l3 4.5l-2.5 4.5h-1.5z" fill="#00f0f0" stroke="#000" stroke-width=".9"/><path d="M1058 70l4 4l1.5-1z" fill="#109090"/>
<path d="M1073 68l4-2h3l1.8 2.8l-4 3.5l-2.5 3z" fill="#f0f000" stroke="#000" stroke-width=".9"/><path d="M1075 73l5-4l1 1l-4 4z" fill="#a0a020"/>
</svg><div class="mi" style="left:1092px;line-height:22px;white-space:nowrap"><u>F</u>ichier</div><div class="mi" style="left:1160px;line-height:22px;white-space:nowrap"><u>E</u>dition</div><div class="mi" style="left:1233px;line-height:22px;white-space:nowrap"><u>A</u>ffichage</div><div class="mi" style="left:1326px;line-height:22px;white-space:nowrap"><u>I</u>nsertion</div><div class="mi" style="left:1413px;line-height:22px;white-space:nowrap">Forma<u>t</u></div><div class="mi" style="left:1488px;line-height:22px;white-space:nowrap"><u>D</u>ébogage</div><div class="mi" style="left:1590px;line-height:22px;white-space:nowrap">E<u>x</u>écution</div><div class="mi" style="left:1683px;line-height:22px;white-space:nowrap"><u>O</u>utils</div><div class="mi" style="left:1747px;line-height:22px;white-space:nowrap"><u>C</u>ompléments</div><div class="mi" style="left:1876px;line-height:22px;white-space:nowrap">Fe<u>n</u>être</div><div class="a" style="left:1048px;top:116px;width:3px;height:24px;background-image:repeating-linear-gradient(#b8b8b8 0 3px,transparent 3px 6px)"></div><svg class="a" style="left:1040px;top:100px" width="680" height="46" viewBox="1040 100 680 46">
<defs>
<pattern id="chk" width="3" height="3" patternUnits="userSpaceOnUse" x="1058" y="115"><rect width="3" height="3" fill="#a88ca8"/><rect width="1.5" height="1.5" fill="#008a00"/><rect x="1.5" y="1.5" width="1.5" height="1.5" fill="#008a00"/></pattern>
<pattern id="chk2" width="3" height="3" patternUnits="userSpaceOnUse" x="1058" y="115"><rect width="3" height="3" fill="#c8dcc8"/><rect width="1.6" height="1.6" fill="#008000"/><rect x="1.5" y="1.5" width="1.6" height="1.6" fill="#008000"/></pattern>
<linearGradient id="bl" x1="0" y1="0" x2="1" y2="1"><stop offset="0" stop-color="#8fb4f0"/><stop offset=".5" stop-color="#4a78d8"/><stop offset="1" stop-color="#1a3a9a"/></linearGradient>
<linearGradient id="sv" x1="0" y1="0" x2="1" y2="1"><stop offset="0" stop-color="#8a8ae0"/><stop offset=".6" stop-color="#4a4ab8"/><stop offset="1" stop-color="#2a2a8a"/></linearGradient>
</defs>
<!-- excel -->
<rect x="1058" y="115" width="24" height="24" fill="url(#chk)"/>
<rect x="1061" y="118" width="18" height="18" fill="#fff"/>
<path d="M1062 119h4.5l2.5 3h3l2-3h4v11l2 1v3h-7l-1 -1h-10z" fill="url(#chk2)"/>
<path d="M1063.5 122.5l10.5 11" stroke="#fff" stroke-width="1.6"/><path d="M1065 131l3 -4" stroke="#fff" stroke-width="1.2"/><path d="M1071 127l3-3" stroke="#fff" stroke-width="1.2"/>
<!-- userform -->
<rect x="1093.5" y="116.5" width="20" height="20" fill="#fff" stroke="#555" stroke-width="1.2"/>
<rect x="1093" y="116" width="21" height="3" fill="#555"/>
<path d="M1096 123h5M1096 127.5h5" stroke="#555" stroke-width="1.3"/>
<rect x="1103.5" y="122" width="8" height="3" fill="#d08a20"/><rect x="1103.5" y="125.5" width="8" height="5" fill="#f6deb0" stroke="#d08a20" stroke-width="1"/><path d="M1104 133h3M1108 133h3" stroke="#d08a20" stroke-width="1.4"/>
<path d="M1124 124h11l-5.5 6z" fill="#000"/>
<!-- save -->
<rect x="1145.5" y="116" width="20.5" height="21.5" rx="1" fill="url(#sv)"/><rect x="1149.5" y="117" width="11.5" height="10" fill="#f4f4fa"/><path d="M1156 126l4-4" stroke="#c8d0e0"/><rect x="1151.5" y="130" width="8" height="5.5" fill="#1a1a3a"/><rect x="1155" y="131" width="3" height="3" fill="#d8d8e8"/>
<path d="M1175.5 116v22" stroke="#8c8c8c"/>
<!-- cut -->
<g stroke="#c4c4c4" stroke-width="2" fill="none"><path d="M1190 116l7 13M1200 116l-7 13"/><circle cx="1192" cy="133" r="3"/><circle cx="1198.5" cy="133" r="3"/></g>
<!-- copy -->
<path d="M1218 116h10l5 4v11h-15z" fill="#d6dad6"/><path d="M1220 118h6M1220 121h6M1220 124h6" stroke="#eef0ee"/>
<path d="M1226 120h10l4.5 4.5v11h-14.5z" fill="#cfd3cf"/><path d="M1228 125h9M1228 128h9M1228 131h9" stroke="#eef0ee"/>
<!-- paste -->
<path d="M1252 118h5v-2h6v2h5v9h-8v10h-8z" fill="#d0d2d0"/><rect x="1257" y="117" width="6" height="3" fill="#e4e6e4"/>
<path d="M1260.5 127h11l4.5 4v6.5h-15.5z" fill="#cfd1cf"/><path d="M1263 130h6M1263 133h8" stroke="#eef0ee"/>
<!-- find -->
<g><rect x="1287" y="124" width="9" height="12.5" rx="1.5" fill="#2a4aa8"/><rect x="1299.5" y="124" width="9" height="12.5" rx="1.5" fill="#2a4aa8"/><rect x="1288.5" y="126" width="4" height="9" fill="#c8d8f0"/><rect x="1301" y="126" width="4" height="9" fill="#c8d8f0"/><rect x="1289" y="116" width="5" height="9" rx="1" fill="#3a5ab8"/><rect x="1301.5" y="116" width="5" height="9" rx="1" fill="#3a5ab8"/><rect x="1290" y="117" width="2" height="3" fill="#e0e8f8"/><rect x="1302.5" y="117" width="2" height="3" fill="#e0e8f8"/><rect x="1295" y="121" width="5.5" height="5" fill="#3a5ab8"/></g>
<path d="M1317.5 116v22" stroke="#8c8c8c"/>
<!-- undo -->
<path d="M1333 123.5a7 7 0 0 1 12-3a8 8 0 0 1-6 14.5" fill="none" stroke="#3a78d8" stroke-width="3.6"/><path d="M1328.4 119.2v9.1l9.1-.7z" fill="#3a78d8"/>
<path d="M1376 123.5a7 7 0 0 0-12-3a8 8 0 0 0 6 14.5" fill="none" stroke="#cfcfcf" stroke-width="3.6"/><path d="M1380.6 119.2v9.1l-9.1-.7z" fill="#cfcfcf"/>
<path d="M1391.5 116v22" stroke="#8c8c8c"/>
<path d="M1407 120v14.2l8-7.1z" fill="#18a018"/><path d="M1407 120v14.2" stroke="#0a600a"/>
<rect x="1439.2" y="120" width="4.8" height="14.2" fill="#2a4ab8"/><rect x="1445.8" y="120" width="4.8" height="14.2" fill="#2a4ab8"/><rect x="1440" y="121" width="2" height="10" fill="#a8c0f0"/><rect x="1446.6" y="121" width="2" height="10" fill="#a8c0f0"/>
<rect x="1472" y="120.3" width="14" height="14" fill="url(#bl)"/>
<!-- design -->
<path d="M1502 115.2v15.5h15z" fill="#3a6ad0"/><path d="M1505.5 124v3.5h3.5z" fill="#fff"/>
<rect x="1503" y="131" width="23" height="6" fill="#d8a020"/><path d="M1505 133v2M1508 133v2M1511 133v2M1514 133v2M1517 133v2M1520 133v2M1523 133v2" stroke="#f8e080"/>
<path d="M1512 128l12-12l2.5 2.5l-12 12z" fill="#f0d060" stroke="#805010" stroke-width=".7"/><path d="M1524 116l2.5 2.5l1-3.5z" fill="#d06050"/>
<path d="M1533.5 116v22" stroke="#8c8c8c"/>
<!-- project explorer -->
<path d="M1544 116l8 3l6 3v4l-7 3l-7-3z" fill="#5a8ae0"/><path d="M1543 127l9 5l8-3v4l-8 4l-9-5z" fill="#b8c8e8" stroke="#3a5aa0" stroke-width=".8"/><path d="M1547 119l8 3M1546 123l8 3" stroke="#d8e8f8"/>
<circle cx="1561" cy="127" r="2.6" fill="#e03020"/><path d="M1560 115l3 3" stroke="#e0a030" stroke-width="2.5"/><path d="M1560 132l3 4" stroke="#e0a030" stroke-width="2.5"/>
<!-- properties -->
<rect x="1576.5" y="121" width="16" height="16" fill="#dce6f8" stroke="#4a6a98" stroke-width="1.2"/><path d="M1579 128h2M1583 128h7M1579 132h2M1583 132h7" stroke="#5a7ab8" stroke-width="1.2"/>
<path d="M1580 122l4-5h11l2 3l-6 5z" fill="#e0b840"/><path d="M1582 121l2-2M1585 121l2-2M1588 121l2-2" stroke="#a08020"/><path d="M1596 116l4 4v4l-4 -1z" fill="#30a040"/>
<!-- object browser -->
<path d="M1614 126h16v11h-16z" fill="#f0d060" stroke="#a88020" stroke-width="1"/><path d="M1612 125l3-3l3 3M1626 125l4-3l2 3" fill="#e8c850" stroke="#a88020" stroke-width=".8"/>
<circle cx="1613" cy="117.5" r="2.8" fill="#4a4ab8"/><path d="M1618 119.5l5-3v6z" fill="#30a040"/><rect x="1628" y="115" width="5.5" height="5.5" fill="#c02818"/>
<!-- toolbox -->
<path d="M1656 125L1663.5 134" stroke="#c8c8c8" stroke-width="4.2"/><path d="M1655.5 125L1649 134" stroke="#c6c6c6" stroke-width="4.4"/>
<path d="M1648.6 121.3L1651.3 117.7L1658.4 117.4L1660.7 119.8L1666.7 124.5L1664.6 127.5L1657.8 124.2L1654.2 124.8z" fill="#cacaca"/>
<path d="M1675.5 116v22" stroke="#8c8c8c"/>
<circle cx="1696" cy="127" r="12" fill="#3d7bd6"/><circle cx="1696" cy="127" r="11.5" fill="none" stroke="#2a62c0" stroke-width="1"/>
<text x="1696" y="134.5" text-anchor="middle" font-family="Liberation Sans" font-weight="bold" font-size="19" fill="#fff">?</text>
</svg><div class="a" style="left:1040px;top:147px;width:180px;height:33px;background:#bfcddb"></div><div class="a" style="left:1042px;top:150px;font-size:17.3px;color:#000;line-height:24px;white-space:nowrap;width:146px;overflow:hidden">Projet - VBAProject</div><div class="a" style="left:1188px;top:148px;width:31px;height:31px;background:#fbf9fc;border:1px solid #9a9a9a"></div><svg class="a" style="left:1194px;top:154px" width="20" height="20" viewBox="0 0 20 20"><path d="M2 2l16 16M18 2L2 18" stroke="#000" stroke-width="3"/></svg><svg class="a" style="left:1040px;top:180px" width="180" height="42" viewBox="1040 180 180 42">
<defs><linearGradient id="tb" x1="0" y1="0" x2="1" y2="0"><stop offset="0" stop-color="#4a7ad8"/><stop offset="1" stop-color="#a8c4f0"/></linearGradient>
<linearGradient id="fd" x1="0" y1="0" x2="1" y2="1"><stop offset="0" stop-color="#fff0a0"/><stop offset=".5" stop-color="#f0c050"/><stop offset="1" stop-color="#c89020"/></linearGradient></defs>
<rect x="1052.5" y="189.5" width="20.5" height="18" fill="#f4f6fa" stroke="#3a4a70" stroke-width="1"/><rect x="1053" y="190" width="19.5" height="3.2" fill="url(#tb)"/><rect x="1053" y="193" width="2.2" height="14" fill="#8aa8d8"/>
<path d="M1058 196.5h5M1065 196.5h3M1058 199.5h4M1064 199.5h4M1058 202.5h4M1064 202.5h4" stroke="#4a6ab0" stroke-width="1.2"/><path d="M1058 196.5h5M1065 196.5h3M1064 202.5h4" stroke="#e84a3a" stroke-width="1.2"/>
<rect x="1085" y="188.5" width="22" height="19" fill="#f4f6fa" stroke="#3a4a70" stroke-width="1"/><rect x="1085.5" y="189" width="21" height="3.2" fill="url(#tb)"/>
<path d="M1088 195h5M1088 201h5" stroke="#777" stroke-width="1.2"/><rect x="1095.5" y="193.5" width="9" height="4.5" rx="1" fill="#fff" stroke="#444" stroke-width="1.2"/><rect x="1095.5" y="199.5" width="9" height="4.5" rx="1" fill="#fff" stroke="#444" stroke-width="1.2"/>
<path d="M1116.5 188v22" stroke="#aaa"/>
<rect x="1120.5" y="183.5" width="33" height="32" fill="#dbe8f4" stroke="#1a78d8" stroke-width="1.2"/>
<path d="M1125.5 189.5h7l1.5 2h12.5v16h-21z" fill="#b89040"/><path d="M1125.5 192.5h21v15h-21z" fill="url(#fd)" stroke="#806020" stroke-width=".8"/>
<path d="M1201 182h17a2 2 0 0 1 1.5 1.5v33a2 2 0 0 1-1.5 1.5h-17z" fill="#a8a8a8"/><path d="M1201 182h17a2 2 0 0 1 1.5 1.5v10.5h-18.5z" fill="#c4c4c4"/>
<path d="M1205 203.5h13" stroke="#000" stroke-width="1.3"/><path d="M1205 202h13" stroke="#fff" stroke-width="1"/><path d="M1204.5 207h14l-7 6.5z" fill="#000"/><path d="M1218.5 207l-7 6.5" stroke="#fff" stroke-width="1"/>
</svg><div class="a" style="left:1041px;top:221px;width:179px;height:797px;background:#fbf9fc;border:1px solid #a0a0a0;border-right:1px solid #e0e0e0"></div><div class="a" style="left:1042px;top:222px;width:177px;height:1px;background:#6e6e6e"></div><svg class="a" style="left:1040px;top:222px" width="180" height="100" viewBox="1040 222 180 100" shape-rendering="crispEdges">
<defs>
<pattern id="ychk" width="3" height="3" patternUnits="userSpaceOnUse"><rect width="3" height="3" fill="#f0f000"/><rect x="1.5" y="0" width="1.5" height="1.5" fill="#b8b8d8"/><rect x="0" y="1.5" width="1.5" height="1.5" fill="#b8b8d8"/></pattern>
<pattern id="gchk" width="3" height="3" patternUnits="userSpaceOnUse"><rect width="3" height="3" fill="#fff"/><rect width="1.5" height="1.5" fill="#109010"/><rect x="1.5" y="1.5" width="1.5" height="1.5" fill="#8a8a8a"/></pattern>
</defs>
<g shape-rendering="auto">
<rect x="1051.75" y="229.75" width="11.5" height="11.5" rx="1.5" fill="#e4e8e4" stroke="#9a9a9a" stroke-width="1.2"/><rect x="1052.5" y="230.5" width="10" height="5" fill="#fafafa"/><path d="M1053.5 235.5h8" stroke="#4a68a8" stroke-width="1.3"/>
<rect x="1078.5" y="253.5" width="12" height="12" rx="1.5" fill="#e4e8e4" stroke="#9a9a9a" stroke-width="1.2"/><rect x="1079.2" y="254.2" width="10.6" height="5" fill="#fafafa"/><path d="M1080.5 259.5h8" stroke="#4a68a8" stroke-width="1.3"/>
</g>
<path d="M1065 235.5h7M1084.5 247v5M1092 259.5h7M1111.5 271v37M1112 283.5h14M1112 307.5h14" stroke="#777" stroke-width="1" stroke-dasharray="1 2"/>
<!-- vbaproject icon pixel art -->
<g fill="#000">
<rect x="1075" y="226" width="3" height="13"/><rect x="1078" y="226" width="1.5" height="1.5"/><rect x="1078" y="229" width="4.5" height="1.5"/><rect x="1080" y="232" width="3" height="3"/><rect x="1078" y="235" width="6" height="3"/><rect x="1084" y="239" width="4.5" height="1.5"/>
<rect x="1087" y="227.5" width="3" height="3"/><rect x="1089" y="224.5" width="3" height="4"/><rect x="1086" y="230.5" width="3" height="3"/><rect x="1089" y="233" width="1.5" height="4.5"/><rect x="1092" y="233" width="1.5" height="4.5"/><rect x="1087" y="238" width="3" height="3"/>
<rect x="1072" y="236" width="3" height="4"/><rect x="1073" y="240" width="3" height="1.5"/><rect x="1079" y="240" width="3" height="2"/><rect x="1081" y="242.5" width="3" height="2"/><rect x="1086" y="242.5" width="3" height="2"/><rect x="1091.5" y="239" width="3" height="2"/>
</g>
<rect x="1075.5" y="227" width="2" height="2" fill="#00e8f0"/><rect x="1078" y="229" width="3" height="1.5" fill="#00e8f0"/><rect x="1079" y="232" width="2" height="1.5" fill="#00e8f0"/><rect x="1081" y="233.5" width="3" height="2" fill="#00e8f0"/><rect x="1086" y="236" width="2" height="2" fill="#00e8f0"/><rect x="1089" y="239" width="2" height="2" fill="#00e8f0"/>
<rect x="1085" y="229.5" width="3" height="1.5" fill="#f0e000"/><rect x="1090.5" y="232" width="1.5" height="3" fill="#f000f0"/><rect x="1090" y="223.5" width="3" height="3" fill="#00e000"/>
<!-- folder icon -->
<path d="M1103 252h10.5l1.5 2.5h7v13h-19z" fill="#fff" stroke="#8a8a8a" stroke-width="1.4"/>
<rect x="1104.5" y="253" width="6" height="3" fill="url(#ychk)"/><rect x="1110.5" y="255" width="10" height="2" fill="url(#ychk)"/>
<rect x="1101" y="258" width="20" height="8.5" fill="#8a8a8a"/><rect x="1103" y="259.5" width="17" height="6" fill="url(#ychk)"/><rect x="1119" y="259" width="2" height="4" fill="#000"/>
<!-- feuil1 icon -->
<path d="M1132.5 272.5h12.5l4 4v16h-16.5z" fill="#fff" stroke="#000" stroke-width="1.3"/><path d="M1133.5 291h14" stroke="#b0b0b0"/><path d="M1134 273.5h10" stroke="#999"/>
<rect x="1127" y="275" width="15" height="13.5" fill="#000"/>
<g fill="#fff"><rect x="1129" y="277" width="3" height="1"/><rect x="1133.5" y="277" width="3" height="1"/><rect x="1138" y="277" width="2.5" height="1"/><rect x="1129" y="280" width="3" height="1"/><rect x="1133.5" y="280" width="3" height="1"/><rect x="1138" y="280" width="2.5" height="1"/><rect x="1129" y="283" width="3" height="1"/><rect x="1133.5" y="283" width="3" height="1"/><rect x="1138" y="283" width="2.5" height="1"/><rect x="1129" y="286" width="3" height="1"/><rect x="1133.5" y="286" width="3" height="1"/><rect x="1138" y="286" width="2.5" height="1"/></g>
<!-- thisworkbook icon -->
<path d="M1130.5 295.5h10.5l6 6v15h-16.5z" fill="#fff" stroke="#000" stroke-width="1.4"/><path d="M1141 295.5v5.5h6" fill="none" stroke="#000" stroke-width="1.2"/>
<path d="M1126 301l3 3l3-3l3 3l3-3v3l-2 2l2 2v3h-3l-3-3l-3 3h-3v-3l2-2l-2-2z" fill="url(#gchk)"/>
</svg><div class="a" style="left:1101px;top:225px;font-size:17px;font-weight:bold;color:#000;line-height:22px;white-space:nowrap;width:118px;overflow:hidden">VBAProject (ENCRE.xlsx)</div><div class="a" style="left:1128px;top:249px;font-size:17px;color:#000;line-height:22px;white-space:nowrap;width:91px;overflow:hidden">Microsoft Excel Objets</div><div class="a" style="left:1155px;top:273px;font-size:17px;color:#000;line-height:22px;white-space:nowrap;width:64px;overflow:hidden">Feuil1 (Feuil1)</div><div class="a" style="left:1155px;top:297px;font-size:17px;color:#000;line-height:22px;white-space:nowrap;width:64px;overflow:hidden">ThisWorkbook</div><svg class="a" style="left:1048px;top:998px" width="14" height="16" viewBox="0 0 14 16"><path d="M10 2L4 7.5L10 13" fill="none" stroke="#5a5a5a" stroke-width="2.6"/></svg><div class="a" style="left:1068px;top:993px;width:82px;height:23px;background:#cdcbcf"></div><svg class="a" style="left:1197px;top:998px" width="14" height="16" viewBox="0 0 14 16"><path d="M4 2L10 7.5L4 13" fill="none" stroke="#5a5a5a" stroke-width="2.6"/></svg><div class="a" style="left:1226px;top:147px;width:694px;height:873px;border-left:2px solid #8a8a8a;border-top:2px solid #8a8a8a;border-bottom:1px solid #ddd"></div><div class="a" style="left:1238px;top:151px;width:369px;height:26px;background:#fbf9fc;border:1px solid #9a9a9a"></div><div class="a" style="left:1241px;top:151px;font-size:16.5px;font-weight:bold;color:#000;line-height:24px">(Général)</div><svg class="a" style="left:1585px;top:157px" width="16" height="12" viewBox="0 0 16 12"><path d="M2 3l6 6 6-6" fill="none" stroke="#333" stroke-width="1.2"/></svg><div class="a" style="left:1617px;top:151px;width:310px;height:26px;background:#fbf9fc;border:1px solid #9a9a9a"></div><div class="a" style="left:1621px;top:151px;font-size:16.5px;font-weight:bold;color:#000;line-height:24px">SurroundingSub</div><div class="a" style="left:1228px;top:178px;width:692px;height:2px;background:#8a8a8a"></div><div class="a" style="left:1229px;top:180px;width:691px;height:805px;background:#fbf9fc"></div><div class="a" style="left:1261px;top:180px;width:1px;height:806px;background:#000"></div><div class="code" style="top:184px">

<span class="k">Dim</span> tabE()
<span class="k">Dim</span> Moy <span class="k">As</span> <span class="k">Double</span>
Moy = Range("AU64").Value
<span class="k">Dim</span> Min <span class="k">As</span> <span class="k">Double</span>
Min = 200
<span class="k">Dim</span> Imin <span class="k">As</span> <span class="k">Double</span>
<span class="k">Dim</span> Ymin <span class="k">As</span> <span class="k">Double</span>



tabE = Range("AK28:AU63")
<span class="k">For</span> i = 10 <span class="k">To</span> 40
    <span class="k">For</span> y = 1 <span class="k">To</span> 100
    Range("AR27").Value = i
    Range("AS27").Value = y
    Moy = Range("AU64").Value
    <span class="k">If</span> [Moy&lt;Min] <span class="k">Then</span>
        Imin = i
        Ymin = y
        Min = Moy
    <span class="k">End If</span>
    <span class="k">Next</span> y
<span class="k">Next</span> i

MsgBox Ymin
MsgBox Imin
Range("AR27").Value = Imin
Range("AS27").Value = Ymin




<span class="k">End Sub</span></div><div class="a" style="left:1273px;top:909px;width:1px;height:22px;background:#000"></div><div class="a" style="left:1229px;top:990px;width:28px;height:27px;background:#fbf9fc;border-right:2px solid #8a8a8a;border-bottom:2px solid #8a8a8a;border-left:1px solid #ddd;border-top:1px solid #ddd"></div><svg class="a" style="left:1236px;top:996px" width="14" height="10" viewBox="0 0 14 10"><path d="M1 2h11M1 5h11" stroke="#000" stroke-width="1.4"/></svg><div class="a" style="left:1257px;top:988px;width:25px;height:28px;background:#fbf9fc;border-left:2px solid #8a8a8a;border-top:2px solid #8a8a8a;border-right:1px solid #ddd;border-bottom:1px solid #ddd"></div><svg class="a" style="left:1263px;top:996px" width="14" height="14" viewBox="0 0 14 14"><path d="M1 2h11M5 5h7M1 8h11M1 11h11" stroke="#000" stroke-width="1.3"/></svg><svg class="a" style="left:1288px;top:996px" width="14" height="16" viewBox="0 0 14 16"><path d="M10 2L4 7.5L10 13" fill="none" stroke="#5a5a5a" stroke-width="2.6"/></svg><div class="a" style="left:1308px;top:991px;width:35px;height:24px;background:#cdcbcf"></div><div class="a" style="left:0;top:1020px;width:1920px;height:60px;background:#1e1e1d"></div><div class="a" style="left:73px;top:1020px;width:514px;height:60px;background:#333034;border:1px solid #5c5a5c;border-bottom:none"></div><div class="a" style="left:132px;top:1039px;font-size:22.5px;color:#d8d8d8;line-height:28px;white-space:nowrap">Taper ici pour rechercher</div><div class="a" style="left:865px;top:1020px;width:46px;height:60px;background:#353335"></div><div class="a" style="left:865px;top:1020px;width:9px;height:57px;background:#3c7a3c"></div><div class="a" style="left:865px;top:1077px;width:32px;height:3px;background:#4ccf4c"></div><div class="a" style="left:897px;top:1077px;width:14px;height:3px;background:#30a030"></div><div class="a" style="left:985px;top:1077px;width:33px;height:3px;background:#a8e0f0"></div><div class="a" style="left:1018px;top:1077px;width:13px;height:3px;background:#90b8a8"></div><div class="a" style="left:1219px;top:1020px;width:51px;height:57px;background:#47464a"></div><div class="a" style="left:1270px;top:1020px;width:7px;height:57px;background:#3a393b"></div><div class="a" style="left:1219px;top:1077px;width:51px;height:3px;background:#a0e8f0"></div><div class="a" style="left:1270px;top:1077px;width:7px;height:3px;background:#90b8a8"></div><div class="a" style="left:1285px;top:1077px;width:46px;height:3px;background:#a0e8f0"></div><div class="a" style="left:1345px;top:1077px;width:46px;height:3px;background:#a0e8f0"></div><svg class="a" style="left:0;top:1020px" width="1920" height="60" viewBox="0 1020 1920 60">
<defs>
<linearGradient id="edg" x1="0" y1="0" x2="1" y2="1"><stop offset="0" stop-color="#2fb8e8"/><stop offset=".55" stop-color="#3ac8d0"/><stop offset="1" stop-color="#58d850"/></linearGradient>
<linearGradient id="off" x1="0" y1="0" x2="1" y2="0"><stop offset="0" stop-color="#c02020"/><stop offset=".5" stop-color="#e03a1a"/><stop offset="1" stop-color="#f06010"/></linearGradient>
</defs>
<!-- windows logo -->
<path d="M23 1042.5l11-1.5v10.5H23zM35.5 1040.8l14.5-2v12.7H35.5zM23 1052.8h11v10.6l-11-1.5zM35.5 1052.8H50v12.8l-14.5-2z" fill="#fff"/>
<!-- search icon -->
<circle cx="105" cy="1045" r="7.5" fill="none" stroke="#e8e8e8" stroke-width="1.6"/><path d="M99.7 1050.3L91 1059" stroke="#e8e8e8" stroke-width="1.8"/>
<!-- cortana -->
<circle cx="624" cy="1049.7" r="9.8" fill="none" stroke="#fff" stroke-width="3.6"/>
<!-- task view -->
<g fill="none" stroke="#fff" stroke-width="1.3"><path d="M684.6 1037.9v3.6h15v-3.6M684.6 1060.9v-3.6h15v3.6M684.6 1044.6h15v9.8h-15zM706.4 1037.9v23"/></g><rect x="704.9" y="1045" width="3" height="3.4" fill="#fff"/>
<!-- explorer -->
<path d="M749.5 1038.5a1.5 1.5 0 0 1 1.5-1.5h9l2.5 2.5H781a1.5 1.5 0 0 1 1.5 1.5v20.5a1.5 1.5 0 0 1-1.5 1.5H751a1.5 1.5 0 0 1-1.5-1.5z" fill="#e8a82a"/>
<path d="M749.5 1041.5h33v20a1.5 1.5 0 0 1-1.5 1.5H751a1.5 1.5 0 0 1-1.5-1.5z" fill="#fad36a"/>
<path d="M757.5 1063v-10.5h17V1063h-3.5v-6.5h-10v6.5z" fill="#3a8ee0"/>
<!-- snipping tool -->
<g transform="rotate(-22 827 1046)"><ellipse cx="827" cy="1046" rx="16" ry="9" fill="#f4f4f4" stroke="#d42a2a" stroke-width="1.5"/><path d="M811 1047a16 9 0 0 0 32 0v3a16 9 0 0 1-32 0z" fill="#8a8a8a"/></g>
<path d="M823 1038l6 14M833 1037l-4 15" stroke="#666" stroke-width="1.8"/>
<ellipse cx="828" cy="1060" rx="3" ry="6" fill="none" stroke="#2a88e0" stroke-width="2" transform="rotate(10 828 1060)"/><ellipse cx="838" cy="1056" rx="5" ry="3" fill="none" stroke="#2a88e0" stroke-width="2" transform="rotate(30 838 1056)"/>
<!-- chrome -->
<circle cx="887.5" cy="1049.5" r="17" fill="#db4437"/>
<path d="M887.5 1049.5L872.8 1058A17 17 0 0 0 887.5 1066.5z" fill="#0f9d58"/><path d="M887.5 1049.5L872.8 1058A17 17 0 0 1 872.8 1041z" fill="#0f9d58"/>
<path d="M887.5 1049.5H904.5A17 17 0 0 1 887.5 1066.5z" fill="#fcc934"/><path d="M887.5 1049.5L902.2 1041A17 17 0 0 1 904.5 1049.5z" fill="#fcc934"/>
<path d="M887.5 1049.5L872.8 1041A17 17 0 0 1 902.2 1041z" fill="#db4437"/>
<circle cx="887.5" cy="1049.5" r="7.6" fill="#fff"/><circle cx="887.5" cy="1049.5" r="6" fill="#4a86e0"/>
<!-- deezer -->
<rect x="931" y="1033" width="33" height="33" rx="4" fill="#181818"/>
<g><rect x="936" y="1054.5" width="5.5" height="2.6" fill="#ff9a00"/><rect x="942.3" y="1054.5" width="5.5" height="2.6" fill="#e8502a"/><rect x="942.3" y="1051.2" width="5.5" height="2.6" fill="#e86a20"/><rect x="942.3" y="1046.2" width="5.5" height="2.6" fill="#ffb020"/>
<rect x="949" y="1054.5" width="5.5" height="2.6" fill="#c03aa0"/><rect x="949" y="1051.2" width="5.5" height="2.6" fill="#b030b0"/>
<rect x="955" y="1054.5" width="5.5" height="2.6" fill="#2a70e0"/><rect x="955" y="1051.2" width="5.5" height="2.6" fill="#20a0e0"/><rect x="955" y="1047.9" width="5.5" height="2.6" fill="#20c080"/><rect x="955" y="1044.6" width="5.5" height="2.6" fill="#20c060"/><rect x="955" y="1041.3" width="5.5" height="2.6" fill="#20b860"/></g>
<!-- sticky notes -->
<rect x="991.5" y="1034" width="32.5" height="32.2" rx="2" fill="#f8d010"/><path d="M1008.5 1066.2L1024 1050.5v13.7a2 2 0 0 1-2 2z" fill="#e8b010"/><path d="M1008.5 1066.2v-8.5a3 3 0 0 1 3-3H1024z" fill="#4a4a4a"/>
<!-- onenote -->
<path d="M1059 1033.8h24a2 2 0 0 1 2 2v27.8a2 2 0 0 1-2 2h-24a2 2 0 0 1-2-2v-27.8a2 2 0 0 1 2-2z" fill="#ca64ea"/>
<rect x="1077" y="1042" width="8" height="8" fill="#ae4bd5"/><rect x="1077" y="1050" width="8" height="8" fill="#9332bf"/><rect x="1077" y="1058" width="8" height="7.6" fill="#7719aa"/>
<rect x="1050" y="1041" width="18" height="18" rx="1.5" fill="#7719aa"/>
<text x="1059" y="1055.5" text-anchor="middle" font-family="Liberation Sans" font-weight="bold" font-size="13" fill="#fff">N</text>
<!-- edge -->
<circle cx="1128" cy="1050" r="18" fill="url(#edg)"/>
<path d="M1110.2 1047a18 18 0 0 0 31 14.5c-3 1.5-7 2-10.5 1.2c-6-1.3-10.5-6-10.5-11.5c0-2.5 1.5-4.8 3.8-5.5c-3.5-2.5-10-1.5-13.8 1.3z" fill="#1068c8"/>
<path d="M1115 1044c4-3 10-3 13 0c-2 1-3.5 3-3.5 5.5c0 5 4 9 9 10.3c2.8.7 5.2.5 7.5-.3c-2 3-6 5.5-11 5.5c-9 0-15-6.5-15-13.5c0-2.7 0-5 0-7.5z" fill="#0a58b0"/>
<circle cx="1128.5" cy="1049.5" r="4.2" fill="#1e1e1d"/>
<!-- office -->
<path d="M1176 1042l13-7l11 3.5v24l-11 3.5l-13-5z" fill="url(#off)"/><path d="M1182 1044l7-2.5v20.5l-7-2z" fill="#1e1e1d"/><path d="M1189 1035l11 3.5v24l-11 3.5z" fill="#e8500e"/>
<!-- excel -->
<path d="M1237 1033.8h23a2 2 0 0 1 2 2v27.8a2 2 0 0 1-2 2h-23a2 2 0 0 1-2-2v-27.8a2 2 0 0 1 2-2z" fill="#21a366"/>
<path d="M1248 1033.8h12a2 2 0 0 1 2 2v6.2h-14z" fill="#33c481"/><rect x="1235" y="1050" width="27" height="8" fill="#107c41"/><path d="M1235 1058h27v5.6a2 2 0 0 1-2 2h-23a2 2 0 0 1-2-2z" fill="#185c37"/>
<rect x="1227" y="1041" width="18" height="18" rx="1.5" fill="#107c41"/>
<text x="1236" y="1055.5" text-anchor="middle" font-family="Liberation Sans" font-weight="bold" font-size="13" fill="#fff">X</text>
<!-- visual studio -->
<path d="M1315 1031.5l11 5v27l-11 5l-14.5-13.5l-6.5 5l-4.5-2.2v-15.6l4.5-2.2l6.5 5z" fill="#8661c5"/>
<path d="M1315 1031.5l11 5v27l-11 5z" fill="#b57fe8"/>
<path d="M1315 1041v18l-9-9z" fill="#1e1e1d"/><path d="M1294 1044.5v11l5.5-5.5z" fill="#1e1e1d"/>
<path d="M1300.5 1050.5l14.5-13.5v4l-10.2 9.5l10.2 9.5v4z" fill="#6a3aa8"/>
<!-- calculator -->
<rect x="1354" y="1031.8" width="28" height="36.2" rx="2" fill="#7a7a7a"/><rect x="1355.5" y="1033.3" width="25" height="33.2" rx="1" fill="#6b6b6b"/>
<rect x="1357" y="1035" width="22" height="6" fill="#40c8f0"/>
<g fill="#dcdcdc"><rect x="1357.5" y="1043" width="5.5" height="5.5"/><rect x="1365.3" y="1043" width="5.5" height="5.5"/><rect x="1373.2" y="1043" width="5.5" height="5.5"/><rect x="1357.5" y="1051" width="5.5" height="5.5"/><rect x="1365.3" y="1051" width="5.5" height="5.5"/><rect x="1357.5" y="1059" width="5.5" height="5.5"/><rect x="1365.3" y="1059" width="5.5" height="5.5"/></g>
<rect x="1373.2" y="1051" width="5.5" height="13.5" fill="#1a4a98"/>
<!-- weather -->
<path d="M1437 1034a9.5 9.5 0 1 1-15.5 9.5a8 8 0 0 0 15.5-9.5z" fill="#f5c518"/>
<path d="M1430 1063.4a5.8 5.8 0 0 1-2-11.2a8.5 8.5 0 0 1 16.5-2.2a7 7 0 0 1 10.5 6.2a7.3 7.3 0 0 1-6.5 7.2z" fill="#d8e8f5"/>
<path d="M1427 1057a5.5 5.5 0 0 0 3 6.4h19.5a7.3 7.3 0 0 0 5.5-3.5c-8 1-20 .5-28-2.9z" fill="#a8cce8"/>
<!-- chevron up -->
<path d="M1489 1053.9l9-9l9 9" fill="none" stroke="#fff" stroke-width="1.4"/>
<!-- network -->
<g fill="none" stroke="#fff" stroke-width="1.3"><path d="M1534.6 1041.7h22.5v14.3h-22.5v-6.5M1534.6 1041.7v7.6h6v-7.6M1537.2 1049.3v9.6M1546.9 1056v2.5M1542 1058.5h8.7M1536.5 1044h3M1538 1044v3"/></g>
<!-- volume -->
<g fill="none" stroke="#fff" stroke-width="1.3"><path d="M1583.6 1046v7.5h2.8l5 5V1041.5l-5 4.5z"/><path d="M1595.5 1046.4l7.3 7.2M1602.8 1046.4l-7.3 7.2"/></g>
<!-- battery -->
<g fill="none" stroke="#fff" stroke-width="1.3"><path d="M1637 1044.4h15.7v11.9h-18v-2.5M1652.7 1047.7h1.3v4.8h-1.3"/><path d="M1630.5 1041v4.5a3 3 0 0 0 3 3h.7a3 3 0 0 0 3-3V1041M1633.8 1048.5v8.3"/></g><rect x="1636" y="1046" width="9" height="8.5" fill="#fff"/>
<!-- pen -->
<g fill="none" stroke="#fff" stroke-width="1.3"><path d="M1693 1058l9.5-16.5a1.8 1.8 0 0 1 3.1 1.8L1696 1059.8l-3.3 1.2z"/><path d="M1692.5 1052.5a4 4 0 0 0-2.5 7.5M1705 1047a2.5 2.5 0 0 1 1.5 4.5"/></g>
<!-- notification -->
<path d="M1857.5 1037.5h26v18.5h-9.5l-4 4.5l-4-4.5h-8.5z" fill="none" stroke="#fff" stroke-width="1.4"/>
<path d="M1911.5 1020v60" stroke="#6a6a6a" stroke-width="2"/>
</svg><div class="a" style="left:1742px;top:1025px;width:80px;text-align:center;font-size:19px;color:#fff;line-height:24px">11:36</div><div class="a" style="left:1722px;top:1054px;width:122px;text-align:center;font-size:19px;color:#fff;line-height:24px">02/07/2021</div></body></html>
